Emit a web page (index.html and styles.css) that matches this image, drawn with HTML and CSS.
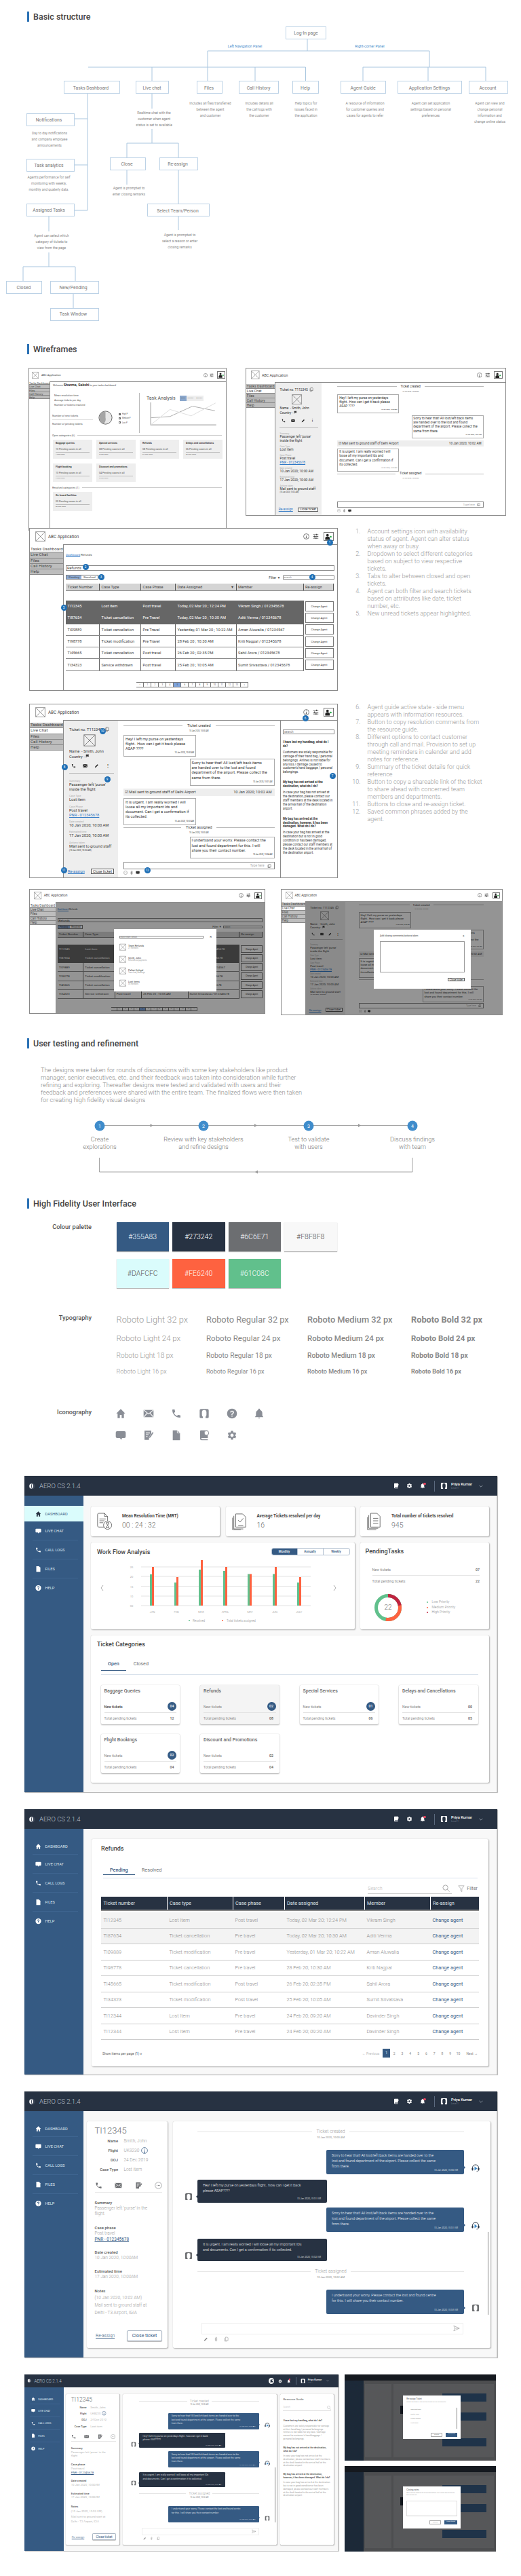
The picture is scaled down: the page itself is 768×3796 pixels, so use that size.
FILE: index.html
```html
<!DOCTYPE html>
<html lang="en">
<head>
    <meta charset="UTF-8">
    <meta name="viewport" content="width=device-width, initial-scale=1.0">
    <title>AERO CS case study</title>
    <link rel="stylesheet" href="styles.css">
</head>
<body>
<svg class="sprite" width="0" height="0">
    <symbol id="i-home" viewBox="0 0 24 24"><path d="M12 2 2 12h3v10h5v-7h4v7h5V12h3z"/></symbol>
    <symbol id="i-mail" viewBox="0 0 24 24"><path d="M1 4h22v16H1z"/><path d="m1 4 11 9 11-9M1 20l8-9M23 20l-8-9" fill="none" stroke="#fff" stroke-width="1.6"/></symbol>
    <symbol id="i-phone" viewBox="0 0 24 24"><path d="M6.600 10.800c1.400 2.800 3.800 5.100 6.600 6.600l2.200-2.200c.3-.3.700-.4 1-.2 1.100.4 2.300.6 3.600.6.600 0 1 .4 1 1V20c0 .6-.4 1-1 1C10.600 21 3 13.400 3 4c0-.6.4-1 1-1h3.500c.6 0 1 .4 1 1 0 1.300.2 2.500.6 3.600.1.3 0 .7-.2 1z"/></symbol>
    <symbol id="i-avatar" viewBox="0 0 24 24"><path d="M5 2h14a3 3 0 0 1 3 3v15a2 2 0 0 1-2 2h-5v-3a5 5 0 0 0 2-4V9a5 5 0 0 0-10 0v6a5 5 0 0 0 2 4v3H4a2 2 0 0 1-2-2V5a3 3 0 0 1 3-3z"/></symbol>
    <symbol id="i-agent" viewBox="0 0 24 24"><path d="M3 14v-3a9 9 0 0 1 18 0v3" fill="none" stroke="currentColor" stroke-width="2"/><rect x="1" y="11" width="4" height="8" rx="1.500"/><rect x="19" y="11" width="4" height="8" rx="1.500"/><path d="M9 7l8 6-8 6z" fill="#3f8ccb"/><path d="M20 19c0 2-2 3-5 3" fill="none" stroke="currentColor" stroke-width="1.500"/></symbol>
    <symbol id="i-help" viewBox="0 0 24 24"><path fill-rule="evenodd" d="M12 1a11 11 0 1 0 0 22 11 11 0 0 0 0-22zm-1.200 15.500h2.400v2.400h-2.400zm-.3-1.800v-.9c0-1.200 3.300-2.200 3.300-4.200 0-1-.8-1.600-1.900-1.600-1.100 0-1.800.7-2 1.700L7.800 9.200C8.200 7 10 5.500 12 5.500c2.500 0 4.300 1.600 4.300 3.900 0 3-3.300 3.600-3.300 5.300z"/></symbol>
    <symbol id="i-bell" viewBox="0 0 24 24"><path d="M12 23a2.200 2.200 0 0 0 2.200-2h-4.400a2.200 2.200 0 0 0 2.200 2zm7-6v-6c0-3.400-1.800-6.200-5-7V3a2 2 0 0 0-4 0v1c-3.200.8-5 3.600-5 7v6l-2 2v1h18v-1z"/></symbol>
    <symbol id="i-chat" viewBox="0 0 24 24"><path d="M4 3h16a3 3 0 0 1 3 3v9a3 3 0 0 1-3 3h-5l-2 4-3-4H4a3 3 0 0 1-3-3V6a3 3 0 0 1 3-3z"/></symbol>
    <symbol id="i-note" viewBox="0 0 24 24"><path d="M3 2h15v6l-5 8v6H3z"/><path d="M6 7h9M6 11h6M6 15h4" stroke="#fff" stroke-width="1.800"/><path d="M14 15 21 5l2 1.500L16 17l-3 1z"/></symbol>
    <symbol id="i-file" viewBox="0 0 24 24"><path d="M4 1h10l6 6v16H4z"/><path d="M14 1v6h6" fill="none" stroke="#fff" stroke-width="1.200"/></symbol>
    <symbol id="i-book" viewBox="0 0 24 24"><path d="M5 1h13a2 2 0 0 1 2 2v15H7a1.500 1.500 0 0 0 0 3h13v2H6a3 3 0 0 1-3-3V3a2 2 0 0 1 2-2z"/><circle cx="17" cy="7" r="5" fill="#fff" stroke="currentColor" stroke-width="1.500"/></symbol>
    <symbol id="i-gear" viewBox="0 0 24 24"><path d="M19.140 12.940c.04-.3.06-.61.06-.94 0-.32-.02-.64-.07-.94l2.030-1.580a.49.49 0 0 0 .12-.61l-1.920-3.320a.488.488 0 0 0-.59-.22l-2.390.96c-.5-.38-1.030-.7-1.620-.94l-.36-2.540a.484.484 0 0 0-.48-.41h-3.840c-.24 0-.43.17-.47.41l-.36 2.540c-.59.24-1.130.57-1.620.94l-2.390-.96c-.22-.08-.47 0-.59.22L2.740 8.870c-.12.21-.08.47.12.61l2.030 1.580c-.05.3-.09.63-.09.94s.02.64.07.94l-2.030 1.580a.49.49 0 0 0-.12.61l1.920 3.320c.12.22.37.29.59.22l2.390-.96c.5.38 1.030.7 1.620.94l.36 2.54c.05.24.24.41.48.41h3.840c.24 0 .44-.17.47-.41l.36-2.540c.59-.24 1.130-.56 1.620-.94l2.390.96c.22.08.47 0 .59-.22l1.920-3.320c.12-.22.07-.47-.12-.61l-2.010-1.580zM12 15.600c-1.980 0-3.600-1.620-3.600-3.600s1.620-3.600 3.600-3.600 3.600 1.620 3.600 3.600-1.620 3.600-3.600 3.600z"/></symbol>
    <symbol id="i-cross" viewBox="0 0 24 24"><path d="M1 1h22v22H1zM1 1l22 22M23 1 1 23" fill="none" stroke="#777" stroke-width="1.200"/></symbol>
    <symbol id="i-logo" viewBox="0 0 24 24"><circle cx="12" cy="12" r="11" fill="#3c4657"/><path d="M12 3a9 9 0 0 0 0 18c-3-3-3-15 0-18z" fill="#fff"/><path d="M12 3c4 2 5 7 4 12l-4 6z" fill="#fff"/></symbol>
    <symbol id="i-doc-time" viewBox="0 0 26 28"><g fill="none" stroke="currentColor" stroke-width=".9"><path d="M13 23H4a2 2 0 0 1-2-2V3a2 2 0 0 1 2-2h9l5 5v8"/><path d="M13 1v5h5M5 10h10M5 13h8M5 16h6"/><circle cx="18" cy="20" r="6.500"/><path d="M15.500 16h5l-2.500 4 2.500 4h-5l2.500-4z"/></g></symbol>
    <symbol id="i-doc-check" viewBox="0 0 26 28"><g fill="none" stroke="currentColor" stroke-width=".9"><path d="M7 2h11l5 5v16H7z"/><path d="M4 5v21h15M2 8v19h13"/><path d="m11 12 3 3 5-6M11 20h8"/></g></symbol>
    <symbol id="i-doc-list" viewBox="0 0 26 28"><g fill="none" stroke="currentColor" stroke-width=".9"><path d="M8 1h10l5 5v17H8z"/><path d="M5 4v21h15M3 7v20h14"/><path d="M12 9h8M12 13h8M12 17h8"/></g></symbol>
    <symbol id="i-send" viewBox="0 0 24 24"><path d="m2 3 20 9-20 9 4-9zM6 12h16" fill="none" stroke="currentColor" stroke-width="1.500"/></symbol>
    <symbol id="i-search" viewBox="0 0 24 24"><circle cx="10" cy="10" r="8" fill="none" stroke="currentColor" stroke-width="1.500"/><path d="m16 16 7 7" stroke="currentColor" stroke-width="1.500"/></symbol>
    <symbol id="i-filter" viewBox="0 0 24 24"><path d="M2 2h20l-8 10v11l-4-3v-8z" fill="none" stroke="currentColor" stroke-width="1.300"/></symbol>
    <symbol id="i-info" viewBox="0 0 24 24"><circle cx="12" cy="12" r="10.500" fill="none" stroke="currentColor" stroke-width="1.800"/><path d="M12 6v2.500M12 11v7M9.500 18h5" stroke="currentColor" stroke-width="2" fill="none"/></symbol>
    <symbol id="i-dots" viewBox="0 0 24 24"><circle cx="12" cy="12" r="10.500" fill="none" stroke="currentColor" stroke-width="1.200"/><path d="M6.500 12h2M11 12h2M15.500 12h2" stroke="currentColor" stroke-width="2"/></symbol>
    <symbol id="i-clip" viewBox="0 0 24 24"><path d="M8 6v12a4 4 0 0 0 8 0V5a3 3 0 0 0-6 0v12a1 1 0 0 0 3 0V7" fill="none" stroke="currentColor" stroke-width="1.500"/></symbol>
    <symbol id="i-sliders" viewBox="0 0 24 24"><path d="M2 5h20M2 12h20M2 19h20" stroke="currentColor" stroke-width="2.200"/><path d="M15 2v6M7 9v6M13 16v6" stroke="currentColor" stroke-width="3"/></symbol>
    <symbol id="i-person" viewBox="0 0 24 24"><circle cx="9" cy="6" r="4.500"/><path d="M1 23v-5c0-5 3-7 8-7s8 2 8 7v5z"/><circle cx="20.500" cy="12" r="3" fill="#18a33a"/></symbol>
    <symbol id="i-pen" viewBox="0 0 24 24"><path d="m3 21 1-5L16 4l4 4L8 20z"/></symbol>
    <symbol id="i-flag" viewBox="0 0 24 24"><path d="M3 3h18l-3 6 3 6H5v7H3z"/></symbol>
    <symbol id="i-copy" viewBox="0 0 24 24"><path d="M8 2h10l3 3v14H8zM4 6v16h13" fill="none" stroke="currentColor" stroke-width="1.800"/></symbol>
</svg>

<main class="page">
    <h2 class="heading">Basic structure</h2>
    <svg class="org" viewBox="0 32 768 475" width="768" height="475">
        <g class="org-lines">
            <path d="M453 58v17M306 75h327M306 75v44M633 75v24M130 99h320.500M224 99v20M376 99v20M450.500 99v20M535 99h181M535 99v20M631 99v20M716 99v20"/>
            <path d="M129 138v172M109 175h20M109 243h20M109 310h20M72 319v22M72 372v21M34 393h77M34 393v21M111 393v21M108 433v21"/>
            <path d="M224 138v22M224 190v21M187 211h76M187 211v21M263 211v21M187 251v21M263 251v49M263 319v20"/>
        </g>
        <text class="org-tag" x="361" y="70">Left Navigation Panel</text>
        <text class="org-tag" x="545" y="70">Right-corner Panel</text>

        <rect class="org-box" x="421.500" y="39.500" width="59" height="18"/><text class="org-name" x="451" y="51">Log-In page</text>
        <rect class="org-box" x="94.500" y="119.500" width="82" height="18"/><text class="org-name" x="134" y="131.500">Tasks Dashboard</text>
        <rect class="org-box" x="200.500" y="119.500" width="48" height="18"/><text class="org-name" x="224" y="131.500">Live chat</text>
        <rect class="org-box" x="290.500" y="119.500" width="37" height="18"/><text class="org-name" x="308" y="131.500">Files</text>
        <rect class="org-box" x="352.500" y="119.500" width="58" height="18"/><text class="org-name" x="381" y="131.500">Call History</text>
        <rect class="org-box" x="431.500" y="119.500" width="38" height="18"/><text class="org-name" x="450" y="131.500">Help</text>
        <rect class="org-box" x="502.500" y="119.500" width="66" height="18"/><text class="org-name" x="535" y="131.500">Agent Guide</text>
        <rect class="org-box" x="586.500" y="119.500" width="94" height="18"/><text class="org-name" x="633" y="131.500">Application Settings</text>
        <rect class="org-box" x="691.500" y="119.500" width="57" height="18"/><text class="org-name" x="719" y="131.500">Account</text>
        <rect class="org-box" x="39.500" y="167.500" width="70" height="18"/><text class="org-name" x="72" y="179">Notifications</text>
        <rect class="org-box" x="39.500" y="234.500" width="70" height="18"/><text class="org-name" x="72" y="246">Task analytics</text>
        <rect class="org-box" x="39.500" y="300.500" width="70" height="18"/><text class="org-name" x="72" y="312">Assigned Tasks</text>
        <rect class="org-box" x="9.500" y="414.500" width="52" height="18"/><text class="org-name" x="35" y="426">Closed</text>
        <rect class="org-box" x="74.500" y="414.500" width="71" height="18"/><text class="org-name" x="108" y="426">New/Pending</text>
        <rect class="org-box" x="74.500" y="454.500" width="71" height="18"/><text class="org-name" x="108" y="465">Task Window</text>
        <rect class="org-box" x="162.500" y="232.500" width="52" height="18"/><text class="org-name" x="187" y="244">Close</text>
        <rect class="org-box" x="235.500" y="232.500" width="56" height="18"/><text class="org-name" x="262" y="244">Re-assign</text>
        <rect class="org-box" x="217.500" y="300.500" width="91" height="18"/><text class="org-name" x="262" y="313">Select Team/Person</text>

        <text class="org-desc" x="310" y="154">Includes all files transferred<tspan x="310" dy="9">between the agent</tspan><tspan x="310" dy="9">and customer</tspan></text>
        <text class="org-desc" x="382" y="154">Includes details all<tspan x="382" dy="9">the call logs with</tspan><tspan x="382" dy="9">the customer</tspan></text>
        <text class="org-desc" x="451" y="154">Help topics for<tspan x="451" dy="9">issues faced in</tspan><tspan x="451" dy="9">the  application</tspan></text>
        <text class="org-desc" x="538" y="154">A resource of information<tspan x="538" dy="9">for customer queries and</tspan><tspan x="538" dy="9">cases for agents to refer</tspan></text>
        <text class="org-desc" x="635" y="154">Agent can set application<tspan x="635" dy="9">settings based on personal</tspan><tspan x="635" dy="9">preferences</tspan></text>
        <text class="org-desc" x="722" y="154">Agent can view and<tspan x="722" dy="9">change personal</tspan><tspan x="722" dy="9">information and</tspan><tspan x="722" dy="9">change online status</tspan></text>
        <text class="org-desc" x="73" y="198">Day to day notifications<tspan x="73" dy="9">and company employee</tspan><tspan x="73" dy="9">announcements</tspan></text>
        <text class="org-desc" x="72" y="263">Agent's performance for self<tspan x="72" dy="9">monitoring with weekly,</tspan><tspan x="72" dy="9">monthly and quaterly data.</tspan></text>
        <text class="org-desc" x="76" y="349">Agent can select which<tspan x="76" dy="9">category of tickets to</tspan><tspan x="76" dy="9">view from the page</tspan></text>
        <text class="org-desc" x="227" y="167.500">Realtime chat with the<tspan x="227" dy="9">customer when agent</tspan><tspan x="227" dy="9">status is set to available</tspan></text>
        <text class="org-desc" x="190" y="279">Agent is prompted to<tspan x="190" dy="9">enter closing remarks</tspan></text>
        <text class="org-desc" x="265" y="347.500">Agent  is prompted to<tspan x="265" dy="9">select a reason or enter</tspan><tspan x="265" dy="9">closing remarks</tspan></text>
    </svg>

    <h2 class="heading">Wireframes</h2>

    <div class="wf-row wf-row-first">
        <div class="wf wf-dash">
            <div class="wf-head">
                <svg class="wf-ph"><use href="#i-cross"/></svg><span class="wf-app">ABC Application</span>
                <span class="wf-tools"><svg><use href="#i-info"/></svg><svg><use href="#i-sliders"/></svg><span class="wf-me"><svg><use href="#i-person"/></svg></span></span>
            </div>
            <div class="wf-body">
                <ul class="wf-nav"><li class="on">Tasks Dashboard</li><li>Live Chat</li><li>Files</li><li>Call History</li><li>Help</li></ul>
                <div class="wf-main wd">
                    <p class="wd-hello">Welcome <b>Sharma, Sakshi</b> to your tasks dashboard</p>
                    <div class="wd-top">
                        <div class="wd-stats">
                            <p>Mean resolution time</p><p>Average tickets per day</p><p>Number of tickets resolved</p>
                        </div>
                        <div class="wd-pending">
                            <p class="rule">Number of new tickets</p><p>Number of pending tickets</p>
                        </div>
                        <svg class="wd-pie" viewBox="0 0 24 24"><circle cx="12" cy="12" r="11" fill="#e8e8e8" stroke="#555"/><path d="M12 12V1a11 11 0 0 0-4 21c4-2 5-6 4-10z" fill="#a5a5a5"/></svg>
                        <ul class="wd-legend"><li><i class="k1"></i>High P</li><li><i class="k2"></i>Medium P</li><li><i class="k3"></i>Low P</li></ul>
                        <div class="wd-task">
                            <div class="wd-task-head">Task Analysis<span class="wd-toggle"><b>Week</b><i>Monthly</i><i>Annually</i></span></div>
                            <svg class="wd-line" viewBox="0 0 110 38"><path d="M6 1v35h102" fill="none" stroke="#aaa" stroke-width="1.200"/><path d="M6 25 36 23 71 7l35 7" fill="none" stroke="#aaa"/><path d="m6 36 30-24 33 10 38-20" fill="none" stroke="#ddd"/></svg>
                        </div>
                    </div>
                    <div class="wd-rule">Open categories (6)</div>
                    <div class="wd-cards">
                        <div class="wd-card"><b>Baggage queries</b><span>10 Pending cases in all</span><small>4 New cases</small></div>
                        <div class="wd-card"><b>Special services</b><span>08 Pending cases in all</span><small>2 New cases</small></div>
                        <div class="wd-card"><b>Refunds</b><span>08 Pending cases in all</span><small>04 New cases</small></div>
                        <div class="wd-card"><b>Delays and cancellations</b><span>06 Pending cases in all</span><small>00 New cases</small></div>
                        <div class="wd-card"><b>Flight booking</b><span>10 Pending cases in all</span><small>2 New cases</small></div>
                        <div class="wd-card"><b>Discount and promotions</b><span>04 Pending cases in all</span><small>2 New cases</small></div>
                    </div>
                    <div class="wd-rule">Resolved categories (1)</div>
                    <div class="wd-cards">
                        <div class="wd-card"><b>On-board facilities</b><span>00 Pending cases in all</span><small>00 New cases</small></div>
                    </div>
                </div>
            </div>
        </div>

        <div class="wf wf-scale-85">
            <div class="wf-head">
                <svg class="wf-ph"><use href="#i-cross"/></svg><span class="wf-app">ABC Application</span>
                <span class="wf-tools"><svg><use href="#i-info"/></svg><svg><use href="#i-sliders"/></svg><span class="wf-me"><svg><use href="#i-person"/></svg></span></span>
            </div>
            <div class="wf-body">
                <ul class="wf-nav"><li>Tasks Dashboard</li><li class="on">Live Chat</li><li>Files</li><li>Call History</li><li>Help</li></ul>
                <div class="wf-main wc wc-full">
                    <div class="wc-info">
                        <p class="wc-no">Ticket no. T112345 <svg><use href="#i-copy"/></svg></p>
                        <svg class="wc-ph"><use href="#i-cross"/></svg>
                        <p class="wc-line">Name &nbsp;- Smith, John</p>
                        <p class="wc-line">Country - <svg class="wc-flag"><use href="#i-flag"/></svg></p>
                        <div class="wc-acts"><svg><use href="#i-phone"/></svg><svg><use href="#i-mail"/></svg><svg><use href="#i-pen"/></svg><span>&#8942;</span></div>
                        <dl class="wc-facts">
                            <dt>Summary</dt><dd>Passenger left 'purse'<br>inside the flight</dd>
                            <dt>Case Type</dt><dd>Lost item</dd>
                            <dt>Case Phase</dt><dd>Post travel<br><a>PNR - 012345678</a></dd>
                            <dt>Date created</dt><dd>10 Jan 2020; 10:00 AM</dd>
                            <dt>Estimated time</dt><dd>17 Jan 2020; 10:00 AM</dd>
                            <dt>Actions taken</dt><dd>Mail sent to ground staff<br><small>(10 Jan 2020, 10:02 AM)</small></dd>
                        </dl>
                        <div class="wc-foot"><a>Re-assign</a><button class="wc-btn">Close ticket</button></div>
                    </div>
                    <div class="wc-chat">
                        <div class="wc-event">Ticket created</div><div class="wc-date">10 Jan 2020, 10:00 AM</div>
                        <div class="wc-msg">Hey! I left my purse on yesterdays<br>flight.. How can i get it back please<br>ASAP ????<small>10 Jan 2020, 10:00 AM</small></div>
                        <div class="wc-msg me">Sorry to hear that! All lost/left back items<br>are handed over to the lost and found<br>department of the airport. Please collect the<br>same from there.<small>10 Jan 2020, 10:01 AM</small></div>
                        <div class="wc-strip"><span>&#9745; Mail sent to ground staff of Delhi Airport</span><span>10 Jan 2020; 10:02 AM</span></div>
                        <div class="wc-msg">It is urgent. I am really worried I will<br>loose all my important Ids and<br>document. Can i get a confirmation if<br>its collected.<small>10 Jan 2020, 10:03 AM</small></div>
                        <div class="wc-event">Ticket assigned</div><div class="wc-date">10 Jan 2020, 10:03 AM</div>
                        <div class="wc-space"></div>
                        <div class="wc-input">Type here <svg><use href="#i-copy"/></svg></div>
                        <div class="wc-tools"><svg><use href="#i-dots"/></svg><svg><use href="#i-clip"/></svg><svg><use href="#i-chat"/></svg></div>
                    </div>
                </div>
            </div>
        </div>
    </div>

    <div class="wf-row wf-row-table">
        <div class="wf wf-wide">
            <div class="wf-head">
                <svg class="wf-ph"><use href="#i-cross"/></svg><span class="wf-app">ABC Application</span>
                <span class="wf-tools"><svg><use href="#i-info"/></svg><svg><use href="#i-sliders"/></svg><span class="wf-me"><svg><use href="#i-person"/></svg></span></span>
            </div>
            <div class="wf-body">
                <ul class="wf-nav"><li class="on">Tasks Dashboard</li><li>Live Chat</li><li>Files</li><li>Call History</li><li>Help</li></ul>
                <div class="wf-main wt">
                    <p class="wt-crumb"><a>Dashboard</a> Refunds</p>
                    <div class="wt-select">Refunds</div>
                    <div class="wt-bar">
                        <span class="wt-tabs"><b>Pending</b><i>Resolved</i></span>
                        <span class="wt-filter">Filter &#9660; <em>search</em></span>
                    </div>
                    <table class="wt-table">
                        <thead><tr><th>Ticket Number</th><th>Case Type</th><th>Case Phase</th><th>Date Assigned <i>&#9662;</i></th><th>Member</th><th>Re-assign</th></tr></thead>
                        <tbody>
                            <tr class="new"><td>TI12345</td><td>Lost item</td><td>Post travel</td><td>Today, 02 Mar 20 ; 12:24 PM</td><td>Vikram Singh / 012345678</td><td><button>Change Agent</button></td></tr>
                            <tr class="new"><td>TI87654</td><td>Ticket cancellation</td><td>Pre Travel</td><td>Today, 02 Mar 20 ; 10:30 AM</td><td>Aditi Verma / 012345678</td><td><button>Change Agent</button></td></tr>
                            <tr><td>TI09889</td><td>Ticket cancellation</td><td>Pre Travel</td><td>Yesterday, 01 Mar 20 ; 10:22 AM</td><td>Aman Aluwalia / 01234567</td><td><button>Change Agent</button></td></tr>
                            <tr><td>TI98778</td><td>Ticket modification</td><td>Pre Travel</td><td>28 Feb 20 ; 10:30 AM</td><td>Kriti Nagpal / 012345678</td><td><button>Change Agent</button></td></tr>
                            <tr><td>TI45665</td><td>Ticket cancellation</td><td>Post travel</td><td>26 Feb 20 ; 02:35 PM</td><td>Sahil Arora / 012345678</td><td><button>Change Agent</button></td></tr>
                            <tr><td>TI34323</td><td>Service withdrawn</td><td>Post travel</td><td>25 Feb 20 ; 10:05 AM</td><td>Sumit Srivastava / 012345678</td><td><button>Change Agent</button></td></tr>
                        </tbody>
                    </table>
                    <div class="wt-pager"><i>&laquo;</i><i>1</i><i>2</i><i>3</i><i>4</i><b>5</b><i>6</i><i>7</i><i>8</i><i>9</i><i>10</i><i>11</i><i>12</i><i>13</i><i>&raquo;</i></div>
                </div>
            </div>
            <span class="pin pin-a1">1</span><span class="pin pin-a2">2</span><span class="pin pin-a3">3</span><span class="pin pin-a4">4</span><span class="pin pin-a5">5</span>
        </div>
        <ol class="notes">
            <li>Account settings icon with availability<br>status of agent. Agent can alter status<br>when away or busy.</li>
            <li>Dropdown to select different categories<br>based on subject to view respective<br>tickets.</li>
            <li>Tabs to alter between closed and open<br>tickets.</li>
            <li>Agent can both filter and search tickets<br>based on attriibutes like date, ticket<br>number, etc.</li>
            <li>New unread tickets appear highlighted.</li>
        </ol>
    </div>

    <div class="wf-row wf-row-chat">
        <div class="wf wf-wide wf-tall">
            <div class="wf-head">
                <svg class="wf-ph"><use href="#i-cross"/></svg><span class="wf-app">ABC Application</span>
                <span class="wf-tools"><svg><use href="#i-info"/></svg><svg><use href="#i-sliders"/></svg><span class="wf-me"><svg><use href="#i-person"/></svg></span></span>
            </div>
            <div class="wf-body">
                <ul class="wf-nav"><li>Tasks Dashboard</li><li class="on">Live Chat</li><li>Files</li><li>Call History</li><li>Help</li></ul>
                <div class="wf-main wc">
                    <div class="wc-info">
                        <p class="wc-no">Ticket no. T112345 <svg><use href="#i-copy"/></svg></p>
                        <svg class="wc-ph"><use href="#i-cross"/></svg>
                        <p class="wc-line">Name &nbsp;- Smith, John</p>
                        <p class="wc-line">Country - <svg class="wc-flag"><use href="#i-flag"/></svg></p>
                        <div class="wc-acts"><svg><use href="#i-phone"/></svg><svg><use href="#i-mail"/></svg><svg><use href="#i-pen"/></svg><span>&#8942;</span></div>
                        <dl class="wc-facts">
                            <dt>Summary</dt><dd>Passenger left 'purse'<br>inside the flight</dd>
                            <dt>Case Type</dt><dd>Lost item</dd>
                            <dt>Case Phase</dt><dd>Post travel<br><a>PNR - 012345678</a></dd>
                            <dt>Date created</dt><dd>10 Jan 2020; 10:00 AM</dd>
                            <dt>Estimated time</dt><dd>17 Jan 2020; 10:00 AM</dd>
                            <dt>Actions taken</dt><dd>Mail sent to ground staff<br><small>(10 Jan 2020, 10:02 AM)</small></dd>
                        </dl>
                        <div class="wc-foot"><a>Re-assign</a><button class="wc-btn">Close ticket</button></div>
                    </div>
                    <div class="wc-chat">
                        <div class="wc-event">Ticket created</div><div class="wc-date">10 Jan 2020, 10:00 AM</div>
                        <div class="wc-msg">Hey! I left my purse on yesterdays<br>flight.. How can i get it back please<br>ASAP ????<small>10 Jan 2020, 10:00 AM</small></div>
                        <div class="wc-msg me">Sorry to hear that! All lost/left back items<br>are handed over to the lost and found<br>department of the airport. Please collect the<br>same from there.<small>10 Jan 2020, 10:01 AM</small></div>
                        <div class="wc-strip"><span>&#9745; Mail sent to ground staff of Delhi Airport</span><span>10 Jan 2020; 10:02 AM</span></div>
                        <div class="wc-msg">It is urgent. I am really worried I will<br>loose all my important Ids and<br>document. Can i get a confirmation if<br>its collected.<small>10 Jan 2020, 10:03 AM</small></div>
                        <div class="wc-event">Ticket assigned</div><div class="wc-date">10 Jan 2020, 10:03 AM</div>
                        <div class="wc-msg me">I undertsand your worry. Please contact the<br>lost and found department for this. I will<br>share you their contact number.<small>10 Jan 2020, 10:04 AM</small></div>
                        <div class="wc-space"></div>
                        <div class="wc-input">Type here <svg><use href="#i-copy"/></svg></div>
                        <div class="wc-tools"><svg><use href="#i-dots"/></svg><svg><use href="#i-clip"/></svg><svg><use href="#i-chat"/></svg></div>
                    </div>
                    <div class="wc-guide">
                        <p class="wc-search">search</p>
                        <h4>I have lost my handbag, what do I do?</h4>
                        <p>Customers are solely responsible for carriage of their hand bag / personal belongings. Airlines is not liable for any loss / damage caused to customer's hand baggage / personal belongings.</p>
                        <h4>My bag has not arrived at the destination, what do I do?</h4>
                        <p>In case your bag has not arrived at the destination, please contact our staff members at the desk located in the arrival hall of the destination airport.</p>
                        <h4>My bag has arrived at the destination, however, it has been damaged. What do I do?</h4>
                        <p>In case your bag has arrived at the destination but is not in good condition or has been damaged, please contact our staff members at the desk located in the arrival hall of the destination airport.</p>
                    </div>
                </div>
            </div>
            <span class="pin pin-b6">6</span><span class="pin pin-b10">10</span><span class="pin pin-b8">8</span><span class="pin pin-b9">9</span><span class="pin pin-b7">7</span><span class="pin pin-b11">11</span><span class="pin pin-b12">12</span>
        </div>
        <ol class="notes" start="6">
            <li>Agent guide active state - side menu<br>appears with information resources.</li>
            <li>Button to copy resolution comments from<br>the resource guide.</li>
            <li>Different options to contact customer<br>through call and mail. Provision to set up<br>meeting reminders in calender and add<br>notes for reference.</li>
            <li>Summary of the ticket details for quick<br>reference</li>
            <li>Button to copy a shareable link of the ticket<br>to share ahead with concerned team<br>members and departments.</li>
            <li>Buttons to close and re-assign ticket.</li>
            <li>Saved common phrases added by the<br>agent.</li>
        </ol>
    </div>

    <div class="wf-row wf-row-modal">
        <div class="wf wf-scale-77">
            <div class="wf-head">
                <svg class="wf-ph"><use href="#i-cross"/></svg><span class="wf-app">ABC Application</span>
                <span class="wf-tools"><svg><use href="#i-info"/></svg><svg><use href="#i-sliders"/></svg><span class="wf-me"><svg><use href="#i-person"/></svg></span></span>
            </div>
            <div class="wf-body">
                <ul class="wf-nav"><li class="on">Tasks Dashboard</li><li>Live Chat</li><li>Files</li><li>Call History</li><li>Help</li></ul>
                <div class="wf-main wt">
                    <p class="wt-crumb"><a>Dashboard</a> Refunds</p>
                    <div class="wt-select">Refunds</div>
                    <div class="wt-bar">
                        <span class="wt-tabs"><b>Pending</b><i>Resolved</i></span>
                        <span class="wt-filter">Filter &#9660; <em>search</em></span>
                    </div>
                    <table class="wt-table">
                        <thead><tr><th>Ticket Number</th><th>Case Type</th><th>Case Phase</th><th>Date Assigned <i>&#9662;</i></th><th>Member</th><th>Re-assign</th></tr></thead>
                        <tbody>
                            <tr class="new"><td>TI12345</td><td>Lost item</td><td>Post travel</td><td>Today, 02 Mar 20 ; 12:24 PM</td><td>Vikram Singh / 012345678</td><td><button>Change Agent</button></td></tr>
                            <tr class="new"><td>TI87654</td><td>Ticket cancellation</td><td>Pre Travel</td><td>Today, 02 Mar 20 ; 10:30 AM</td><td>Aditi Verma / 012345678</td><td><button>Change Agent</button></td></tr>
                            <tr><td>TI09889</td><td>Ticket cancellation</td><td>Pre Travel</td><td>Yesterday, 01 Mar 20 ; 10:22 AM</td><td>Aman Aluwalia / 01234567</td><td><button>Change Agent</button></td></tr>
                            <tr><td>TI98778</td><td>Ticket modification</td><td>Pre Travel</td><td>28 Feb 20 ; 10:30 AM</td><td>Kriti Nagpal / 012345678</td><td><button>Change Agent</button></td></tr>
                            <tr><td>TI45665</td><td>Ticket cancellation</td><td>Post travel</td><td>26 Feb 20 ; 02:35 PM</td><td>Sahil Arora / 012345678</td><td><button>Change Agent</button></td></tr>
                            <tr><td>TI34323</td><td>Service withdrawn</td><td>Post travel</td><td>25 Feb 20 ; 10:05 AM</td><td>Sumit Srivastava / 012345678</td><td><button>Change Agent</button></td></tr>
                        </tbody>
                    </table>
                    <div class="wt-pager"><i>&laquo;</i><i>1</i><i>2</i><i>3</i><i>4</i><b>5</b><i>6</i><i>7</i><i>8</i><i>9</i><i>10</i><i>11</i><i>12</i><i>13</i><i>&raquo;</i></div>
                    <div class="wf-shade"></div>
                    <div class="wf-modal wf-modal-team">
                        <div class="wm-top"><span class="wm-field">Search team/ person</span><b>&#10005;</b></div>
                        <div class="wm-item"><svg><use href="#i-cross"/></svg><p>Team Refunds<small>27 members</small></p></div>
                        <div class="wm-item"><svg><use href="#i-cross"/></svg><p>Smith, John<small>Refunds and payments</small></p></div>
                        <div class="wm-item"><svg><use href="#i-cross"/></svg><p>Pallavi Sehgal<small>Team lead, Bookings</small></p></div>
                        <div class="wm-item"><svg><use href="#i-cross"/></svg><p>Lost items<small>33 members</small></p></div>
                    </div>
                </div>
            </div>
        </div>

        <div class="wf wf-scale-72">
            <div class="wf-head">
                <svg class="wf-ph"><use href="#i-cross"/></svg><span class="wf-app">ABC Application</span>
                <span class="wf-tools"><svg><use href="#i-info"/></svg><svg><use href="#i-sliders"/></svg><span class="wf-me"><svg><use href="#i-person"/></svg></span></span>
            </div>
            <div class="wf-body">
                <ul class="wf-nav"><li>Tasks Dashboard</li><li class="on">Live Chat</li><li>Files</li><li>Call History</li><li>Help</li></ul>
                <div class="wf-main wc wc-full">
                    <div class="wc-info">
                        <p class="wc-no">Ticket no. T112345 <svg><use href="#i-copy"/></svg></p>
                        <svg class="wc-ph"><use href="#i-cross"/></svg>
                        <p class="wc-line">Name &nbsp;- Smith, John</p>
                        <p class="wc-line">Country - <svg class="wc-flag"><use href="#i-flag"/></svg></p>
                        <div class="wc-acts"><svg><use href="#i-phone"/></svg><svg><use href="#i-mail"/></svg><svg><use href="#i-pen"/></svg><span>&#8942;</span></div>
                        <dl class="wc-facts">
                            <dt>Summary</dt><dd>Passenger left 'purse'<br>inside the flight</dd>
                            <dt>Case Type</dt><dd>Lost item</dd>
                            <dt>Case Phase</dt><dd>Post travel<br><a>PNR - 012345678</a></dd>
                            <dt>Date created</dt><dd>10 Jan 2020; 10:00 AM</dd>
                            <dt>Estimated time</dt><dd>17 Jan 2020; 10:00 AM</dd>
                            <dt>Actions taken</dt><dd>Mail sent to ground staff<br><small>(10 Jan 2020, 10:02 AM)</small></dd>
                        </dl>
                        <div class="wc-foot"><a>Re-assign</a><button class="wc-btn">Close ticket</button></div>
                    </div>
                    <div class="wc-chat">
                        <div class="wc-event">Ticket created</div><div class="wc-date">10 Jan 2020, 10:00 AM</div>
                        <div class="wc-msg">Hey! I left my purse on yesterdays<br>flight.. How can i get it back please<br>ASAP ????<small>10 Jan 2020, 10:00 AM</small></div>
                        <div class="wc-msg me">Sorry to hear that! All lost/left back items<br>are handed over to the lost and found<br>department of the airport. Please collect the<br>same from there.<small>10 Jan 2020, 10:01 AM</small></div>
                        <div class="wc-strip"><span>&#9745; Mail sent to ground staff of Delhi Airport</span><span>10 Jan 2020; 10:02 AM</span></div>
                        <div class="wc-msg">It is urgent. I am really worried I will<br>loose all my important Ids and<br>document. Can i get a confirmation if<br>its collected.<small>10 Jan 2020, 10:03 AM</small></div>
                        <div class="wc-event">Ticket assigned</div><div class="wc-date">10 Jan 2020, 10:03 AM</div>
                        <div class="wc-msg me">I undertsand your worry. Please contact the<br>lost and found department for this. I will<br>share you their contact number.<small>10 Jan 2020, 10:04 AM</small></div>
                        <div class="wc-space"></div>
                        <div class="wc-input">Type here <svg><use href="#i-copy"/></svg></div>
                        <div class="wc-tools"><svg><use href="#i-dots"/></svg><svg><use href="#i-clip"/></svg><svg><use href="#i-chat"/></svg></div>
                    </div>
                    <div class="wf-shade"></div>
                    <div class="wf-modal wf-modal-close">
                        <div class="wm-top"><span>Add closing comments/actions taken</span><b>&#10005;</b></div>
                        <div class="wm-area"></div>
                        <div class="wm-foot"><button class="wc-btn">Close ticket</button></div>
                    </div>
                </div>
            </div>
        </div>
    </div>

    <h2 class="heading heading-testing">User testing and refinement</h2>
    <p class="intro">The designs were taken for rounds of discussions with some key stakeholders like product<br>manager, senior executives, etc. and their feedback was taken into consideration while further<br>refining and exploring. Thereafter designs were tested and validated with users and their<br>feedback and preferences were shared with the entire team. The finalized flows were then taken<br>for creating high fidelity visual designs</p>
    <svg class="steps" viewBox="0 1645 768 90" width="768" height="90">
        <path class="step-line" d="M147 1658.500h461M146.500 1706v21h461.500v-21"/>
        <path class="step-arrow" d="M221.500 1656v5l4-2.500zM375 1656v5l4-2.500zM528 1656v5l4-2.500zM380 1724.500v5l-4-2.500z"/>
        <circle class="step-dot" cx="147" cy="1659" r="7.500"/><text class="step-no" x="147" y="1661.500">1</text>
        <circle class="step-dot" cx="300" cy="1659" r="7.500"/><text class="step-no" x="300" y="1661.500">2</text>
        <circle class="step-dot" cx="455" cy="1659" r="7.500"/><text class="step-no" x="455" y="1661.500">3</text>
        <circle class="step-dot" cx="608" cy="1659" r="7.500"/><text class="step-no" x="608" y="1661.500">4</text>
        <text class="step-name" x="147" y="1682">Create<tspan x="147" dy="11">explorations</tspan></text>
        <text class="step-name" x="300" y="1682">Review with key stakeholders<tspan x="300" dy="11">and refine designs</tspan></text>
        <text class="step-name" x="455" y="1682">Test to validate<tspan x="455" dy="11">with users</tspan></text>
        <text class="step-name" x="608" y="1682">Discuss findings<tspan x="608" dy="11">with team</tspan></text>
    </svg>

    <h2 class="heading heading-hifi">High Fidelity User Interface</h2>
    <div class="spec spec-palette">
        <h3 class="spec-label">Colour palette</h3>
        <div class="swatches">
            <div class="swatch sw-blue">#355A83</div>
            <div class="swatch sw-navy">#273242</div>
            <div class="swatch sw-grey">#6C6E71</div>
            <div class="swatch sw-white">#F8F8F8</div>
            <div class="swatch sw-aqua">#DAFCFC</div>
            <div class="swatch sw-orange">#FE6240</div>
            <div class="swatch sw-green">#61C08C</div>
        </div>
    </div>
    <div class="spec spec-type">
        <h3 class="spec-label">Typography</h3>
        <div class="type-grid">
            <span class="t-light t32">Roboto Light 32 px</span><span class="t-reg t32">Roboto Regular 32 px</span><span class="t-med t32">Roboto Medium 32 px</span><span class="t-bold t32">Roboto Bold 32 px</span>
            <span class="t-light t24">Roboto Light 24 px</span><span class="t-reg t24">Roboto Regular 24 px</span><span class="t-med t24">Roboto Medium 24 px</span><span class="t-bold t24">Roboto Bold 24 px</span>
            <span class="t-light t18">Roboto Light 18 px</span><span class="t-reg t18">Roboto Regular 18 px</span><span class="t-med t18">Roboto Medium 18 px</span><span class="t-bold t18">Roboto Bold 18 px</span>
            <span class="t-light t16">Roboto Light 16 px</span><span class="t-reg t16">Roboto Regular 16 px</span><span class="t-med t16">Roboto Medium 16 px</span><span class="t-bold t16">Roboto Bold 16 px</span>
        </div>
    </div>
    <div class="spec spec-icons">
        <h3 class="spec-label">Iconography</h3>
        <div class="icon-grid">
            <svg><use href="#i-home"/></svg><svg><use href="#i-mail"/></svg><svg><use href="#i-phone"/></svg><svg><use href="#i-avatar"/></svg><svg><use href="#i-help"/></svg><svg><use href="#i-bell"/></svg>
            <svg><use href="#i-chat"/></svg><svg><use href="#i-note"/></svg><svg><use href="#i-file"/></svg><svg><use href="#i-book"/></svg><svg><use href="#i-gear"/></svg>
        </div>
    </div>

    <!-- dashboard -->
    <section class="mock mock-dash">
        <header class="mock-head">
            <svg class="mock-logo"><use href="#i-logo"/></svg><span class="mock-brand">AERO CS 2.1.4</span>
            <div class="mock-tools"><svg><use href="#i-book"/></svg><svg><use href="#i-gear"/></svg><span class="mock-bell"><svg><use href="#i-bell"/></svg></span><svg class="mock-me"><use href="#i-avatar"/></svg><p class="mock-user">Priya Kumar<small>Level 1</small></p><svg class="mock-chev" viewBox="0 0 10 6"><path d="m1 1 4 4 4-4"/></svg></div>
        </header>
        <nav class="mock-side">
            <a class="active"><svg><use href="#i-home"/></svg>DASHBOARD</a>
            <a><svg><use href="#i-chat"/></svg>LIVE CHAT</a>
            <a><svg><use href="#i-phone"/></svg>CALL LOGS</a>
            <a><svg><use href="#i-file"/></svg>FILES</a>
            <a><svg><use href="#i-help"/></svg>HELP</a>
        </nav>
        <div class="mock-main dash">
            <div class="card stat"><svg class="stat-ic"><use href="#i-doc-time"/></svg><div><h5>Mean Resolution Time (MRT)</h5><p>00 : 24 : 32</p></div></div>
            <div class="card stat"><svg class="stat-ic"><use href="#i-doc-check"/></svg><div><h5>Average Tickets resolved per day</h5><p>16</p></div></div>
            <div class="card stat"><svg class="stat-ic"><use href="#i-doc-list"/></svg><div><h5>Total number of tickets resolved</h5><p>945</p></div></div>

            <div class="card flow">
                <div class="card-top"><h4>Work Flow Analysis</h4><div class="seg"><b>Monthly</b><span>Annually</span><span>Weekly</span></div></div>
                <svg class="flow-chart" viewBox="0 20 390 108" width="390" height="108">
                    <path class="grid" d="M74 36h250M74 50h250M74 64.700h250M74 79h250M74 93h250"/>
                    <g class="axis"><text x="60" y="38">25</text><text x="60" y="52">20</text><text x="60" y="66.700">15</text><text x="60" y="81">10</text><text x="60" y="95">00</text></g>
                    <g class="axis"><text x="90.500" y="104">JAN</text><text x="126" y="104">FEB</text><text x="162.500" y="104">MAR</text><text x="198" y="104">APRIL</text><text x="234.500" y="104">MAY</text><text x="271" y="104">JUN</text><text x="306.700" y="104">JULY</text></g>
                    <g class="bar-g"><rect x="87" y="47" width="3" height="46"/><rect x="123" y="59" width="3" height="34"/><rect x="159" y="40" width="3" height="53"/><rect x="195" y="42" width="3" height="51"/><rect x="231" y="46.500" width="3" height="46.500"/><rect x="268" y="46.500" width="3" height="46.500"/><rect x="304" y="59" width="3" height="34"/></g>
                    <g class="bar-r"><rect x="90" y="36" width="3" height="57"/><rect x="126" y="51" width="3" height="42"/><rect x="162" y="26" width="3" height="67"/><rect x="198" y="36" width="3" height="57"/><rect x="234" y="46.500" width="3" height="46.500"/><rect x="271" y="36" width="3" height="57"/><rect x="307" y="51" width="3" height="42"/></g>
                    <path class="flow-nav" d="M18 63l-3 4 3 4M358 63l3 4-3 4"/>
                    <circle class="dot-g" cx="145" cy="115" r="1"/><text class="leg" x="150" y="117">Resolved</text>
                    <circle class="dot-r" cx="194" cy="115" r="1"/><text class="leg" x="200" y="117">Total tickets  assigned</text>
                </svg>
            </div>
            <div class="card pending">
                <h4>PendingTasks</h4>
                <div class="kv"><span>New tickets</span><b>07</b></div>
                <div class="kv"><span>Total pending tickets</span><b>22</b></div>
                <div class="pending-low">
                    <svg class="donut" viewBox="0 0 40 40"><circle cx="20" cy="20" r="17.500" stroke="#61c08c"/><circle cx="20" cy="20" r="17.500" stroke="#fe6240" pathLength="100" stroke-dasharray="32 68" stroke-dashoffset="-21"/><circle cx="20" cy="20" r="17.500" stroke="#c0233f" pathLength="100" stroke-dasharray="22 78" stroke-dashoffset="0"/><text x="20" y="23">22</text></svg>
                    <ul class="prio"><li class="g">Low Priority</li><li class="o">Medium Priority</li><li class="r">High Priority</li></ul>
                </div>
            </div>

            <div class="card cats">
                <h4>Ticket Categories</h4>
                <div class="tabs"><span class="on">Open</span><span>Closed</span></div>
                <div class="cat-grid">
                    <div class="cat"><h6>Baggage Queries</h6><div class="row"><span class="strong">New tickets</span><b class="pill">04</b></div><div class="row"><span>Total pending tickets</span><b>12</b></div></div>
                    <div class="cat hover"><h6>Refunds</h6><div class="row"><span>New tickets</span><b class="pill">02</b></div><div class="row"><span>Total pending tickets</span><b>08</b></div></div>
                    <div class="cat"><h6>Special Services</h6><div class="row"><span>New tickets</span><b class="pill">01</b></div><div class="row"><span>Total pending tickets</span><b>06</b></div></div>
                    <div class="cat"><h6>Delays and Cancellations</h6><div class="row"><span>New tickets</span><b>00</b></div><div class="row"><span>Total pending tickets</span><b>05</b></div></div>
                    <div class="cat"><h6>Flight Bookings</h6><div class="row"><span>New tickets</span><b class="pill">02</b></div><div class="row"><span>Total pending tickets</span><b>04</b></div></div>
                    <div class="cat"><h6>Discount and Promotions</h6><div class="row"><span>New tickets</span><b>02</b></div><div class="row"><span>Total pending tickets</span><b>04</b></div></div>
                </div>
            </div>
        </div>
    </section>

    <!-- refunds -->
    <section class="mock mock-refunds">
        <header class="mock-head">
            <svg class="mock-logo"><use href="#i-logo"/></svg><span class="mock-brand">AERO CS 2.1.4</span>
            <div class="mock-tools"><svg><use href="#i-book"/></svg><svg><use href="#i-gear"/></svg><span class="mock-bell"><svg><use href="#i-bell"/></svg></span><svg class="mock-me"><use href="#i-avatar"/></svg><p class="mock-user">Priya Kumar<small>Level 1</small></p><svg class="mock-chev" viewBox="0 0 10 6"><path d="m1 1 4 4 4-4"/></svg></div>
        </header>
        <nav class="mock-side">
            <a><svg><use href="#i-home"/></svg>DASHBOARD</a>
            <a><svg><use href="#i-chat"/></svg>LIVE CHAT</a>
            <a><svg><use href="#i-phone"/></svg>CALL LOGS</a>
            <a><svg><use href="#i-file"/></svg>FILES</a>
            <a><svg><use href="#i-help"/></svg>HELP</a>
        </nav>
        <div class="mock-main refunds">
            <div class="card ref-card">
                <h4>Refunds</h4>
                <div class="tabs"><span class="on">Pending</span><span>Resolved</span></div>
                <div class="ref-tools"><span class="ref-search">Search<svg><use href="#i-search"/></svg></span><span class="ref-filter"><svg><use href="#i-filter"/></svg>Filter</span></div>
                <table class="ref-table">
                    <thead><tr><th>Ticket number</th><th>Case type</th><th>Case phase</th><th>Date assigned</th><th>Member</th><th>Re-assign</th></tr></thead>
                    <tbody>
                        <tr class="new"><td>TI12345</td><td>Lost Item</td><td>Post travel</td><td>Today, 02 Mar 20; 12:24 PM</td><td>Vikram Singh</td><td><a>Change agent</a></td></tr>
                        <tr class="new"><td>TI87654</td><td>Ticket cancellation</td><td>Pre travel</td><td>Today, 02 Mar 20; 10:30 AM</td><td>Aditi Verma</td><td><a>Change agent</a></td></tr>
                        <tr><td>TI09889</td><td>Ticket modification</td><td>Pre travel</td><td>Yesterday, 01 Mar 20; 10:22 AM</td><td>Aman Aluwalia</td><td><a>Change agent</a></td></tr>
                        <tr><td>TI98778</td><td>Ticket cancellation</td><td>Pre travel</td><td>28 Feb 20; 10:30 AM</td><td>Kriti Nagpal</td><td><a>Change agent</a></td></tr>
                        <tr><td>TI45665</td><td>Ticket modification</td><td>Post travel</td><td>26 Feb 20; 02:35 PM</td><td>Sahil Arora</td><td><a>Change agent</a></td></tr>
                        <tr><td>TI34323</td><td>Ticket modification</td><td>Post travel</td><td>25 Feb 20; 10:05 AM</td><td>Sumit Srivatsava</td><td><a>Change agent</a></td></tr>
                        <tr><td>TI12344</td><td>Lost Item</td><td>Pre travel</td><td>24 Feb 20; 09:20 AM</td><td>Davinder Singh</td><td><a>Change agent</a></td></tr>
                        <tr><td>TI12344</td><td>Lost Item</td><td>Pre travel</td><td>24 Feb 20; 09:20 AM</td><td>Davinder Singh</td><td><a>Change agent</a></td></tr>
                    </tbody>
                </table>
                <div class="ref-foot">
                    <span class="ref-per">Show items per page <em>(1)</em> &#8744;</span>
                    <div class="ref-pager"><span class="off">&#8592; Previous</span><b>1</b><i>2</i><i>3</i><i>4</i><i>5</i><i>6</i><i>7</i><i>8</i><i>9</i><i>10</i><span>Next &#8594;</span></div>
                </div>
            </div>
        </div>
    </section>

    <!-- chat -->
    <section class="mock mock-chat">
        <header class="mock-head">
            <svg class="mock-logo"><use href="#i-logo"/></svg><span class="mock-brand">AERO CS 2.1.4</span>
            <div class="mock-tools"><svg><use href="#i-book"/></svg><svg><use href="#i-gear"/></svg><span class="mock-bell"><svg><use href="#i-bell"/></svg></span><svg class="mock-me"><use href="#i-avatar"/></svg><p class="mock-user">Priya Kumar<small>Level 1</small></p><svg class="mock-chev" viewBox="0 0 10 6"><path d="m1 1 4 4 4-4"/></svg></div>
        </header>
        <nav class="mock-side">
            <a><svg><use href="#i-home"/></svg>DASHBOARD</a>
            <a><svg><use href="#i-chat"/></svg>LIVE CHAT</a>
            <a><svg><use href="#i-phone"/></svg>CALL LOGS</a>
            <a><svg><use href="#i-file"/></svg>FILES</a>
            <a><svg><use href="#i-help"/></svg>HELP</a>
        </nav>
        <div class="mock-main chat">
            <aside class="card tk">
                <h3>TI12345</h3>
                <dl class="tk-meta"><dt>Name</dt><dd>Smith, John</dd><dt>Flight</dt><dd>UK8230 <svg><use href="#i-info"/></svg></dd><dt>DOJ</dt><dd>24 Dec 2019</dd><dt>Case Type</dt><dd>Lost item</dd></dl>
                <div class="tk-acts"><svg><use href="#i-phone"/></svg><svg><use href="#i-mail"/></svg><svg><use href="#i-note"/></svg><svg><use href="#i-dots"/></svg></div>
                <div class="tk-fact f-sum"><h6>Summary</h6><p>Passenger left 'purse' in the<br>flight</p></div>
                <div class="tk-fact f-phase"><h6>Case phase</h6><p>Post travel</p><a>PNR - 012345678</a></div>
                <div class="tk-fact"><h6>Date created</h6><p>10 Jan 2020, 10:00AM</p></div>
                <div class="tk-fact"><h6>Estimated time</h6><p>17 Jan 2020, 10:00AM</p></div>
                <div class="tk-fact f-notes"><h6>Notes</h6><p>(10 Jan 2020, 10:02 AM)<br>Mail sent to ground staff at<br>Delhi - T3 Airport, IGIA</p></div>
                <div class="tk-foot"><a>Re-assign</a><button>Close ticket</button></div>
            </aside>
            <div class="card conv">
                <div class="conv-event">Ticket created</div><div class="conv-date">10 Jan 2020, 10:00 AM</div>
                <div class="msg agent m1">Sorry to hear that! All lost/left back items are handed over to the<br>lost and found department of the airport. Please collect the same<br>from there.<small>10 Jan 2020, 10:00 AM</small><svg class="msg-av"><use href="#i-agent"/></svg></div>
                <div class="msg cust m2">Hey! I left my purse on yesterdays flight.. how can i get it back<br>please ASAP????<small>10 Jan 2020, 10:01 AM</small><svg class="msg-av"><use href="#i-avatar"/></svg></div>
                <div class="msg agent m3">Sorry to hear that! All lost/left back items are handed over to the<br>lost and found department of the airport. Please collect the same<br>from there.<small>10 Jan 2020, 10:01 AM</small><svg class="msg-av"><use href="#i-agent"/></svg></div>
                <div class="msg cust m4">It is urgent. I am really worried I will loose all my important IDs<br>and documents. Can I get a confirmation if its collected.<small>10 Jan 2020, 10:02 AM</small><svg class="msg-av"><use href="#i-avatar"/></svg></div>
                <div class="conv-event e2">Ticket assigned</div><div class="conv-date">10 Jan 2020, 10:02 AM</div>
                <div class="msg agent m5">I undertsand your worry. Please contact the lost and found centre<br>for this. I will share you their contact number.<small>10 Jan 2020, 10:04 AM</small><svg class="msg-av av-grey"><use href="#i-avatar"/></svg></div>
                <div class="conv-input"><svg><use href="#i-send"/></svg></div>
                <div class="conv-tools"><svg><use href="#i-pen"/></svg><svg><use href="#i-clip"/></svg><svg><use href="#i-copy"/></svg></div>
                <span class="conv-scroll"></span>
            </div>
        </div>
    </section>

    <!-- agent guide + modals -->
    <div class="last-row">
        <section class="mock mock-guide">
            <header class="mock-head">
                <svg class="mock-logo"><use href="#i-logo"/></svg><span class="mock-brand">AERO CS 2.1.4</span>
                <div class="mock-tools"><span class="guide-on"><svg><use href="#i-book"/></svg></span><svg><use href="#i-gear"/></svg><span class="mock-bell"><svg><use href="#i-bell"/></svg></span><svg class="mock-me"><use href="#i-avatar"/></svg><p class="mock-user">Priya Kumar<small>Level 1</small></p><svg class="mock-chev" viewBox="0 0 10 6"><path d="m1 1 4 4 4-4"/></svg></div>
            </header>
            <nav class="mock-side">
                <a><svg><use href="#i-home"/></svg>DASHBOARD</a>
                <a><svg><use href="#i-chat"/></svg>LIVE CHAT</a>
                <a><svg><use href="#i-phone"/></svg>CALL LOGS</a>
                <a><svg><use href="#i-file"/></svg>FILES</a>
                <a><svg><use href="#i-help"/></svg>HELP</a>
            </nav>
            <div class="mock-main chat">
                <aside class="card tk">
                    <h3>TI12345</h3>
                    <dl class="tk-meta"><dt>Name</dt><dd>Smith, John</dd><dt>Flight</dt><dd>UK8230 <svg><use href="#i-info"/></svg></dd><dt>DOJ</dt><dd>24 Dec 2019</dd><dt>Case Type</dt><dd>Lost item</dd></dl>
                    <div class="tk-acts"><svg><use href="#i-phone"/></svg><svg><use href="#i-mail"/></svg><svg><use href="#i-note"/></svg><svg><use href="#i-dots"/></svg></div>
                    <div class="tk-fact f-sum"><h6>Summary</h6><p>Passenger left 'purse' in the<br>flight</p></div>
                    <div class="tk-fact f-phase"><h6>Case phase</h6><p>Post travel</p><a>PNR - 012345678</a></div>
                    <div class="tk-fact"><h6>Date created</h6><p>10 Jan 2020, 10:00AM</p></div>
                    <div class="tk-fact"><h6>Estimated time</h6><p>17 Jan 2020, 10:00AM</p></div>
                    <div class="tk-fact f-notes"><h6>Notes</h6><p>(10 Jan 2020, 10:02 AM)<br>Mail sent to ground staff at<br>Delhi - T3 Airport, IGIA</p></div>
                    <div class="tk-foot"><a>Re-assign</a><button>Close ticket</button></div>
                </aside>
                <div class="card conv">
                    <div class="conv-event">Ticket created</div><div class="conv-date">10 Jan 2020, 10:00 AM</div>
                    <div class="msg agent m1">Sorry to hear that! All lost/left back items are handed over to the<br>lost and found department of the airport. Please collect the same<br>from there.<small>10 Jan 2020, 10:00 AM</small><svg class="msg-av"><use href="#i-agent"/></svg></div>
                    <div class="msg cust m2">Hey! I left my purse on yesterdays flight.. how can i get it back<br>please ASAP????<small>10 Jan 2020, 10:01 AM</small><svg class="msg-av"><use href="#i-avatar"/></svg></div>
                    <div class="msg agent m3">Sorry to hear that! All lost/left back items are handed over to the<br>lost and found department of the airport. Please collect the same<br>from there.<small>10 Jan 2020, 10:01 AM</small><svg class="msg-av"><use href="#i-agent"/></svg></div>
                    <div class="msg cust m4">It is urgent. I am really worried I will loose all my important IDs<br>and documents. Can I get a confirmation if its collected.<small>10 Jan 2020, 10:02 AM</small><svg class="msg-av"><use href="#i-avatar"/></svg></div>
                    <div class="conv-event e2">Ticket assigned</div><div class="conv-date">10 Jan 2020, 10:02 AM</div>
                    <div class="msg agent m5">I undertsand your worry. Please contact the lost and found centre<br>for this. I will share you their contact number.<small>10 Jan 2020, 10:04 AM</small><svg class="msg-av av-grey"><use href="#i-avatar"/></svg></div>
                    <div class="conv-input"><svg><use href="#i-send"/></svg></div>
                    <div class="conv-tools"><svg><use href="#i-pen"/></svg><svg><use href="#i-clip"/></svg><svg><use href="#i-copy"/></svg></div>
                    <span class="conv-scroll"></span>
                </div>
                <aside class="card guide">
                    <h4>Resource Guide</h4>
                    <div class="guide-search">Search<svg><use href="#i-search"/></svg></div>
                    <h6>I have lost my handbag, what do I do?</h6>
                    <p>Customers are solely responsible for carriage of their hand bag / personal belongings. Airlines is not liable for any loss / damage caused to customer's hand baggage / personal belongings.</p>
                    <h6>My bag has not arrived at the destination, what do I do?</h6>
                    <p>In case your bag has not arrived at the destination, please contact our staff members at the desk located in the arrival hall of the destination airport.</p>
                    <h6>My bag has arrived at the destination, however, it has been damaged. What do I do?</h6>
                    <p>In case your bag has arrived at the destination but is not in good condition or has been damaged, please contact our staff members at the desk located in the arrival hall of the destination airport.</p>
                </aside>
            </div>
        </section>

        <div class="thumbs">
            <div class="thumb">
                <div class="th-head"></div>
                <div class="th-body">
                    <div class="th-side"></div>
                    <div class="th-panel"></div>
                    <div class="th-chat"><i class="b1"></i><i class="b2"></i><i class="b3"></i><i class="b4"></i></div>
                </div>
                <div class="th-modal">
                    <h6>Re-assign Ticket</h6>
                    <p>Select the team or person the ticket will be assigned to</p>
                    <div class="th-list"><span>Team Refunds</span><span>Smith, John</span><span>Pallavi Sehgal</span><span>Lost items</span></div>
                    <div class="th-btns"><u>Cancel</u><b>Re-assign</b></div>
                </div>
            </div>
            <div class="thumb">
                <div class="th-head"></div>
                <div class="th-body">
                    <div class="th-side"></div>
                    <div class="th-panel"></div>
                    <div class="th-chat"><i class="b1"></i><i class="b2"></i><i class="b3"></i><i class="b4"></i></div>
                </div>
                <div class="th-modal th-modal-notes">
                    <h6>Closing notes</h6>
                    <p>Add closing remarks for this ticket before it is closed and moved to the closed list</p>
                    <div class="th-area"></div>
                    <div class="th-btns"><u>Cancel</u><b>Close ticket</b></div>
                </div>
            </div>
        </div>
    </div>
</main>
</body>
</html>
```

FILE: styles.css
```css
* {
    box-sizing: border-box;
}
body {
    margin: 0;
    background: #fff;
    color: #666;
    font-family: Roboto, "Liberation Sans", sans-serif;
}
p, h2, h3, h4, h5, h6, ul, ol, dl, dd {
    margin: 0;
    padding: 0;
}
ul {
    list-style: none;
}
.sprite {
    position: absolute;
}
svg {
    fill: currentColor;
}
.page {
    width: 768px;
    height: 3796px;
    padding-top: 17px;
    overflow: hidden;
}

/* section headings */
.heading {
    height: 15px;
    margin-left: 40px;
    padding-left: 6px;
    border-left: 3px solid #2a70b4;
    color: #444;
    font-size: 12.500px;
    font-weight: 500;
    line-height: 15px;
}
.heading-testing {
    margin-top: 34px;
}
.heading-hifi {
    margin-top: 31px;
}

/* org chart */
.org {
    display: block;
}
.org-lines path {
    fill: none;
    stroke: #a9c6df;
    stroke-width: 1;
}
.org-box {
    fill: #fff;
    stroke: #bcd2e6;
    stroke-width: 1;
}
.org-name, .org-desc, .org-tag {
    text-anchor: middle;
    font-family: Roboto, sans-serif;
}
.org-name {
    fill: #777;
    font-size: 6.800px;
}
.org-desc {
    fill: #888;
    font-size: 5px;
}
.org-tag {
    fill: #3f8ccb;
    font-size: 5.300px;
}

/* wireframes */
.wf-row {
    display: flex;
    padding-left: 43px;
}
.wf-row-first {
    margin-top: 20px;
    height: 217px;
    padding-left: 42px;
}
.wf-row-first .wf-dash {
    width: 292px;
    margin-right: 28px;
}
.wf-row-table {
    margin-top: 19px;
    height: 240px;
}
.wf-row-chat {
    margin-top: 19px;
    height: 257px;
}
.wf-row-modal {
    margin-top: 16px;
    height: 186px;
}
.wf {
    position: relative;
    display: flex;
    flex-direction: column;
    width: 454.500px;
    height: 240px;
    border: 1px solid #8a8a8a;
    background: #fff;
    color: #444;
    flex: none;
}
.wf-tall {
    height: 257px;
}
.wf-scale-85 {
    zoom: .85;
    height: 256px;
    width: 452px;
}
.wf-scale-77 {
    zoom: .766;
    margin-right: 30px;
}
.wf-scale-72 {
    zoom: .72;
    height: 258px;
}
.wf-head {
    display: flex;
    align-items: center;
    flex: none;
    height: 23px;
    padding: 0 5px 0 8px;
}
.wf-ph {
    width: 15px;
    height: 15px;
    color: #777;
}
.wf-app {
    margin-left: 4px;
    font-size: 6.300px;
}
.wf-tools {
    display: flex;
    align-items: center;
    gap: 5px;
    margin-left: auto;
}
.wf-tools > svg {
    width: 9px;
    height: 9px;
}
.wf-me {
    display: flex;
    align-items: center;
    justify-content: center;
    width: 15px;
    height: 13px;
    margin-left: 2px;
    border: 1px solid #777;
}
.wf-me svg {
    width: 10px;
    height: 10px;
    color: #222;
}
.wf-body {
    display: flex;
    flex: 1;
    min-height: 0;
}
.wf-nav {
    flex: none;
    width: 49px;
    padding-top: 4px;
    font-size: 6.200px;
}
.wf-nav li {
    height: 8.300px;
    padding-left: 1px;
    background: #bdbdbd;
    border-bottom: 1px solid #888;
    line-height: 7.500px;
    white-space: nowrap;
}
.wf-nav li.on {
    background: #fff;
}
.wf-main {
    position: relative;
    flex: 1;
    min-width: 0;
    border-top: 1px solid #8a8a8a;
    border-left: 1px solid #8a8a8a;
}
.pin {
    position: absolute;
    width: 9px;
    height: 9px;
    margin: -4.500px 0 0 -4.500px;
    border-radius: 50%;
    background: #1f6fb5;
    color: #fff;
    font-size: 4.500px;
    line-height: 9px;
    text-align: center;
}
.pin-a1 { left: 442px; top: 20px; }
.pin-a2 { left: 82px; top: 56px; }
.pin-a3 { left: 105px; top: 71px; }
.pin-a4 { left: 416px; top: 71px; }
.pin-a5 { left: 50px; top: 116px; }
.pin-b6 { left: 406px; top: 20px; }
.pin-b10 { left: 107px; top: 39px; }
.pin-b8 { left: 51px; top: 92px; }
.pin-b9 { left: 114px; top: 110px; }
.pin-b7 { left: 446px; top: 105px; }
.pin-b11 { left: 50px; top: 244px; }
.pin-b12 { left: 173px; top: 244px; }

/* wireframe: dashboard */
.wf-dash .wf-head {
    height: 19px;
    padding: 0 1px 0 4px;
}
.wf-dash .wf-ph {
    width: 10px;
    height: 12px;
}
.wf-dash .wf-app {
    font-size: 4px;
}
.wf-dash .wf-tools {
    gap: 3px;
}
.wf-dash .wf-tools > svg {
    width: 6px;
    height: 6px;
}
.wf-dash .wf-me {
    width: 12px;
    height: 11px;
}
.wf-dash .wf-me svg {
    width: 8px;
    height: 8px;
}
.wf-dash .wf-nav {
    width: 30px;
    padding-top: 0;
    font-size: 4px;
}
.wf-dash .wf-nav li {
    height: 5.300px;
    line-height: 5px;
    padding: 0;
}
.wd {
    padding: 0 6px 0 3px;
    font-size: 3.800px;
    color: #555;
}
.wd-hello {
    height: 16px;
    padding: 0 0 0 1px;
    line-height: 5px;
    padding-top: 2px;
    font-size: 3.600px;
}
.wd-hello b {
    font-size: 5.400px;
    color: #333;
}
.wd-top {
    display: grid;
    grid-template-columns: 60px 35px 33px 1fr;
    grid-template-rows: 29px 25px;
    height: 59px;
}
.wd-stats {
    grid-column: 1 / 4;
    padding-left: 3px;
    line-height: 7.200px;
}
.wd-pending {
    align-self: start;
    padding-top: 1px;
}
.wd-pending p {
    line-height: 7px;
}
.wd-pending .rule {
    padding-bottom: 2px;
    margin-bottom: 2px;
    border-bottom: 1px solid #ddd;
}
.wd-pie {
    width: 21px;
    height: 21px;
    margin: -3px 0 0 8px;
}
.wd-legend {
    margin: -1px 0 0 3px;
    font-size: 2.800px;
}
.wd-legend li {
    display: flex;
    align-items: center;
    gap: 2px;
    height: 6.300px;
    white-space: nowrap;
}
.wd-legend i {
    width: 3px;
    height: 3px;
    border: .5px solid #666;
}
.wd-legend .k1 {
    background: #888;
}
.wd-legend .k2 {
    background: #ccc;
}
.wd-task {
    grid-column: 4;
    grid-row: 1 / 3;
    height: 59px;
    padding: 4px 0 0 10px;
    border-left: 1px solid #bbb;
}
.wd-task-head {
    display: flex;
    align-items: center;
    gap: 6px;
    color: #555;
    font-size: 7px;
    line-height: 8px;
}
.wd-toggle {
    display: flex;
    font-size: 2.400px;
    font-style: normal;
}
.wd-toggle b {
    background: #8aa7cc;
    padding: 0 2px;
}
.wd-toggle i {
    background: #eee;
    padding: 0 2px;
    font-style: normal;
}
.wd-line {
    display: block;
    width: 105px;
    height: 36px;
    margin-top: 1px;
}
.wd-rule {
    display: flex;
    align-items: center;
    gap: 4px;
    height: 8px;
    margin-top: -1px;
    white-space: nowrap;
    font-size: 3.800px;
}
.wd-rule::after {
    content: "";
    flex: 1;
    border-top: 1px solid #ccc;
}
.wd-cards {
    display: grid;
    grid-template-columns: repeat(4, 58px);
    gap: 7px 6px;
    margin-top: 3px;
    margin-bottom: 5px;
    padding-left: 1px;
}
.wd-card {
    display: flex;
    flex-direction: column;
    height: 27.500px;
    padding: 3px 4px;
    background: #eee;
    font-size: 3.700px;
    white-space: nowrap;
}
.wd-card b {
    color: #444;
}
.wd-card span {
    margin-top: 5px;
    padding-bottom: 2px;
    border-bottom: 1px solid #bbb;
}
.wd-card small {
    margin-top: 1px;
    font-size: 2.400px;
}

/* wireframe: table */
.wt {
    padding: 0 4px 0 3px;
    font-size: 5.700px;
}
.wt-crumb {
    height: 9px;
    margin-top: 10px;
    font-size: 4.400px;
    line-height: 9px;
}
.wt-crumb a, .wc-foot a, .wc-facts a {
    color: #2f78c5;
    text-decoration: underline;
}
.wt-select {
    height: 8px;
    margin-top: 11px;
    margin-right: 0;
    border: 1px solid #888;
    border-top-width: 1px;
    font-size: 5.700px;
    line-height: 7px;
    padding-left: 1px;
}
.wt-bar {
    display: flex;
    justify-content: space-between;
    align-items: center;
    height: 9px;
    margin-top: 5px;
}
.wt-tabs {
    display: flex;
    border: 1px solid #777;
    font-size: 4.300px;
    line-height: 5.500px;
}
.wt-tabs b {
    width: 22px;
    background: #8cabd6;
    font-weight: 400;
    text-align: center;
}
.wt-tabs i {
    width: 24px;
    font-style: normal;
    text-align: center;
}
.wt-filter {
    display: flex;
    align-items: center;
    gap: 3px;
    font-size: 5px;
}
.wt-filter em {
    width: 76px;
    height: 6px;
    padding-left: 1px;
    border: 1px solid #888;
    font-size: 3.800px;
    font-style: normal;
    line-height: 4px;
    color: #888;
}
.wt-table {
    width: 395px;
    margin-top: 4.500px;
    border-collapse: collapse;
    table-layout: fixed;
    font-size: 5.700px;
}
.wt-table th {
    height: 11px;
    padding-left: 2.500px;
    background: #d5d5d5;
    border-right: 1px solid #555;
    border-bottom: 1px solid #888;
    font-weight: 400;
    text-align: left;
    white-space: nowrap;
}
.wt-table th:nth-child(1), .wt-table td:nth-child(1) { width: 49.500px; }
.wt-table th:nth-child(2), .wt-table td:nth-child(2) { width: 61px; }
.wt-table th:nth-child(3), .wt-table td:nth-child(3) { width: 51px; }
.wt-table th:nth-child(4), .wt-table td:nth-child(4) { width: 89.500px; }
.wt-table th:nth-child(5), .wt-table td:nth-child(5) { width: 99px; }
.wt-table th i {
    float: right;
    margin-right: 3px;
    font-style: normal;
}
.wt-table thead::after {
    content: "";
    display: table-row;
    height: 14px;
}
.wt-table td {
    height: 17.300px;
    padding: 0 0 0 2.500px;
    border-right: 1px solid #666;
    border-bottom: 1px solid #888;
    white-space: nowrap;
    overflow: hidden;
}
.wt-table td:last-child {
    border: 0;
    padding: 0 0 0 2px;
}
.wt-table .new td {
    background: #666;
    color: #fff;
    border-bottom-color: #666;
}
.wt-table .new td:last-child {
    background: #fff;
}
.wt-table button {
    display: block;
    width: 42px;
    height: 15px;
    padding: 0;
    background: #fff;
    border: 1px solid #777;
    border-right-width: 1.500px;
    border-bottom-width: 1.500px;
    font: 3.800px Roboto, sans-serif;
    color: #333;
}
.wt-pager {
    display: flex;
    justify-content: center;
    margin-top: 16px;
    padding-right: 22px;
    height: 8px;
    font-size: 3px;
}
.wt-pager i, .wt-pager b {
    width: 11px;
    border: 1px solid #777;
    border-left-width: 0;
    font-style: normal;
    font-weight: 400;
    text-align: center;
    line-height: 6px;
}
.wt-pager b {
    background: #7da4dd;
}

/* wireframe: chat */
.wc {
    display: flex;
}
.wc-info {
    position: relative;
    flex: none;
    width: 80px;
    padding: 9px 0 0 8px;
    background: #eee;
    font-size: 5.700px;
    color: #333;
}
.wc-no {
    display: flex;
    align-items: center;
    gap: 3px;
    height: 7px;
    white-space: nowrap;
}
.wc-no svg {
    width: 7px;
    height: 9px;
}
.wc-ph {
    display: block;
    width: 18px;
    height: 18px;
    margin: 4px 0 4px 21px;
}
.wc-line {
    height: 7.400px;
    line-height: 7.400px;
    margin-top: 0;
    white-space: nowrap;
}
.wc-flag {
    width: 6px;
    height: 6px;
}
.wc-acts {
    display: flex;
    gap: 10px;
    align-items: center;
    height: 9px;
    margin-top: 5px;
    padding-left: 3px;
}
.wc-acts svg {
    width: 7px;
    height: 7px;
    color: #222;
}
.wc-acts span {
    font-weight: 700;
}
.wc-facts {
    margin-top: 6px;
    padding-top: 5px;
    border-top: 1px solid #bbb;
    margin-right: 6px;
    white-space: nowrap;
    line-height: 7px;
}
.wc-facts dt {
    margin-top: 3.300px;
    color: #aaa;
    font-size: 3.800px;
    line-height: 5px;
}
.wc-facts dd small {
    display: block;
    font-size: 3px;
    line-height: 4px;
}
.wc-foot {
    position: absolute;
    left: 6px;
    right: 6px;
    bottom: 5px;
    display: flex;
    justify-content: space-between;
    align-items: center;
}
.wc-btn {
    height: 8px;
    padding: 0 2px;
    background: #fff;
    border: 1px solid #555;
    font: 5.400px Roboto, sans-serif;
    line-height: 5px;
    color: #333;
}
.wc-chat {
    display: flex;
    flex-direction: column;
    flex: 1;
    min-width: 0;
    padding: 4px 8px 3px 8px;
    font-size: 5.700px;
    line-height: 7.300px;
    color: #333;
}
.wc-full .wc-chat {
    padding: 4px 38px 3px 28px;
}
.wc-event {
    display: flex;
    align-items: center;
    gap: 7px;
    height: 7px;
    font-size: 5.500px;
    white-space: nowrap;
}
.wc-event::before, .wc-event::after {
    content: "";
    flex: 1;
    border-top: 1px solid #bbb;
}
.wc-date {
    margin-top: 1px;
    height: 6px;
    font-size: 2.800px;
    text-align: center;
    line-height: 6px;
}
.wc-msg {
    width: 107px;
    margin-top: 3px;
    padding: 1.500px 2px 2px 2px;
    border: 1px solid #aaa;
    border-bottom-width: 1.500px;
    white-space: nowrap;
}
.wc-msg small {
    display: block;
    font-size: 2.800px;
    line-height: 5px;
    text-align: right;
}
.wc-msg.me {
    align-self: flex-end;
    width: 125px;
}
.wc-strip {
    display: flex;
    justify-content: space-between;
    height: 11px;
    margin-top: 4px;
    padding: 0 4px 0 2px;
    background: #eee;
    font-size: 5.500px;
    line-height: 11px;
}
.wc-space {
    flex: 1;
}
.wc-input {
    display: flex;
    align-items: center;
    justify-content: flex-end;
    gap: 4px;
    height: 11px;
    padding-right: 4px;
    border: 1px solid #888;
    color: #aaa;
    font-size: 4.800px;
}
.wc-input svg {
    width: 6px;
    height: 6px;
    color: #333;
}
.wc-tools {
    display: flex;
    gap: 3px;
    margin-top: 2px;
    height: 7px;
}
.wc-tools svg {
    width: 6px;
    height: 6px;
}
.wc-guide {
    flex: none;
    width: 84px;
    padding: 13px 4px 0 3.500px;
    border-left: 1px solid #8a8a8a;
    font-size: 4.500px;
    line-height: 5.900px;
    color: #333;
}
.wc-search {
    height: 7px;
    margin-bottom: 13px;
    border: 1px solid #888;
    border-bottom-width: 1.500px;
    color: #888;
    line-height: 5px;
    padding-left: 1px;
}
.wc-guide h4 {
    margin: 0 0 3px;
    font-size: 4.500px;
    font-weight: 700;
    line-height: 5.900px;
}
.wc-guide p {
    margin-bottom: 9px;
}
.wf-shade {
    position: absolute;
    inset: 0;
    background: rgba(0, 0, 0, .42);
}
.wf-modal {
    position: absolute;
    background: #fff;
    font-size: 4.700px;
    color: #333;
}
.wf-modal-team {
    left: 112px;
    top: 52px;
    width: 197px;
    height: 120px;
    padding: 12px 10px 0;
}
.wf-modal-close {
    left: 139px;
    top: 57px;
    width: 198px;
    height: 121px;
    padding: 10px 12px 0;
}
.wm-top {
    display: flex;
    justify-content: space-between;
    align-items: center;
}
.wm-field {
    width: 162px;
    height: 6px;
    border: 1px solid #888;
    font-size: 3.500px;
    line-height: 4px;
    color: #888;
}
.wm-item {
    display: flex;
    gap: 4px;
    align-items: center;
    height: 23px;
    margin-top: 0;
}
.wm-top + .wm-item {
    margin-top: 5px;
}
.wm-item svg {
    width: 13px;
    height: 15px;
}
.wm-item small {
    display: block;
    color: #999;
    font-size: 3.500px;
    line-height: 4px;
}
.wm-area {
    height: 64px;
    margin-top: 8px;
    border: 1px solid #999;
}
.wm-foot {
    display: flex;
    justify-content: flex-end;
    margin-top: 11px;
}

/* case study text */
.notes {
    margin: 0 0 0 36px;
    padding: 0;
    color: #999;
    font-size: 9px;
    font-weight: 300;
    line-height: 11px;
    white-space: nowrap;
}
.notes li {
    padding-left: 8px;
}
.intro {
    margin: 26px 0 0 60px;
    color: #888;
    font-size: 9.250px;
    font-weight: 300;
    line-height: 11px;
    white-space: nowrap;
}
.steps {
    display: block;
    margin-top: 19px;
}
.step-line {
    fill: none;
    stroke: #a5a5a5;
    stroke-width: 1;
}
.step-arrow {
    fill: #999;
}
.step-dot {
    fill: #3f8ccb;
}
.step-no {
    fill: #fff;
    font-size: 7px;
    text-anchor: middle;
}
.step-name {
    fill: #777;
    font-size: 9.200px;
    font-weight: 300;
    text-anchor: middle;
}

/* spec blocks */
.spec {
    display: flex;
    position: relative;
}
.spec-label {
    flex: none;
    width: 135px;
    margin-right: 36.500px;
    color: #555;
    font-size: 9.200px;
    font-weight: 500;
    text-align: right;
    white-space: nowrap;
}
.spec-palette {
    margin-top: 20px;
    height: 97px;
}
.spec-palette .spec-label {
    padding-top: 1px;
}
.swatches {
    display: grid;
    grid-template-columns: repeat(4, 77.500px);
    grid-template-rows: 43px 43px;
    gap: 11px 5px;
}
.swatch {
    display: flex;
    align-items: center;
    justify-content: center;
    box-shadow: 0 1px 1px rgba(0, 0, 0, .3);
    color: #fff;
    font-size: 10.500px;
    font-weight: 300;
}
.sw-blue { background: #355a83; }
.sw-navy { background: #273242; }
.sw-grey { background: #6c6e71; }
.sw-white { background: #f8f8f8; color: #555; }
.sw-aqua { background: #dafcfc; color: #555; }
.sw-orange { background: #fe6240; }
.sw-green { background: #61c08c; }
.spec-type {
    margin-top: 32px;
    height: 104px;
}
.spec-type .spec-label {
    padding-top: 6px;
}
.type-grid {
    display: grid;
    grid-template-columns: 132.500px 149px 153px 150px;
    grid-template-rows: 28px 28px 22px 26px;
    align-items: center;
    white-space: nowrap;
    color: #888;
}
.t-light { font-weight: 300; color: #999; }
.t-reg { font-weight: 400; }
.t-med { font-weight: 500; }
.t-bold { font-weight: 700; }
.t32 { font-size: 12.800px; }
.t24 { font-size: 11.500px; }
.t18 { font-size: 10.200px; }
.t16 { font-size: 9px; }
.spec-icons {
    margin-top: 41px;
    height: 64px;
}
.spec-icons .spec-label {
    margin-right: 23px;
}
.icon-grid {
    display: grid;
    grid-template-columns: repeat(6, 40.800px);
    grid-template-rows: 16px 16px;
    row-gap: 16px;
    justify-items: center;
    color: #8a8e96;
}
.icon-grid svg {
    width: 16px;
    height: 16px;
}

/* high fidelity mocks */
.mock {
    display: grid;
    grid-template-columns: 87px 1fr;
    grid-template-rows: 29px 1fr;
    width: 697px;
    margin-left: 36px;
    background: #f8f8f8;
    box-shadow: 0 0 1px rgba(0, 0, 0, .5), 1px 1px 1px rgba(0, 0, 0, .2);
}
.mock-dash {
    height: 466px;
    margin-top: 36px;
}
.mock-refunds {
    height: 391px;
    margin-top: 25px;
}
.mock-chat {
    height: 392px;
    margin-top: 25px;
}
.mock-head {
    display: flex;
    align-items: center;
    grid-column: 1 / 3;
    padding: 0 21px 0 6px;
    background: #273242;
}
.mock-logo {
    width: 10px;
    height: 10px;
}
.mock-brand {
    margin-left: 6px;
    color: #b8c2cf;
    font-size: 9.500px;
    font-weight: 300;
}
.mock-tools {
    display: flex;
    align-items: center;
    margin-left: auto;
    color: #fff;
}
.mock-tools > svg, .mock-bell svg, .guide-on svg {
    display: block;
    width: 8px;
    height: 9px;
    margin-right: 11.500px;
}
.mock-tools > svg:nth-child(2) {
    width: 9px;
    margin-right: 11px;
}
.mock-bell {
    position: relative;
    display: flex;
    align-items: center;
    height: 16px;
    margin-right: 8px;
    border-right: 1px solid #5b6a7e;
}
.mock-bell svg {
    margin-right: 12.500px;
}
.mock-bell::after {
    content: "";
    position: absolute;
    right: 12px;
    top: 3px;
    width: 3.500px;
    height: 3.500px;
    border-radius: 50%;
    background: #e8455f;
}
.mock-tools > .mock-me {
    width: 11px;
    height: 11px;
    margin-right: 5.500px;
}
.mock-user {
    width: 41px;
    padding-left: 0;
    font-size: 5.700px;
    font-weight: 500;
    line-height: 7px;
    white-space: nowrap;
}
.mock-user small {
    display: block;
    color: #6f7b8c;
    font-size: 3.500px;
    font-weight: 400;
    line-height: 5px;
}
.mock-tools > .mock-chev {
    width: 6px;
    height: 4px;
    margin: 0;
    fill: none;
    stroke: #cfd6df;
    stroke-width: 1;
}
.mock-side {
    padding-top: 15px;
    background: #355a83;
    color: #dfe7f0;
    font-size: 5.700px;
}
.mock-side a {
    display: flex;
    align-items: center;
    height: 28px;
    margin: 0 8px 0 11.500px;
    padding-left: 4px;
    border-bottom: 1px solid #3f6590;
}
.mock-side a svg {
    width: 9px;
    height: 10px;
    margin-right: 6px;
    color: #fff;
}
.mock-side a:first-child {
    height: 23px;
}
.mock-side a:last-child {
    border: 0;
}
.mock-side a.active {
    margin: 0;
    padding-left: 15.500px;
    background: #dafcfc;
    color: #355a83;
    border: 0;
}
.mock-side a.active svg {
    color: #273242;
}
.card {
    background: #fff;
    border-radius: 2px;
    box-shadow: 0 0 1px rgba(0, 0, 0, .3), 1px 1px 2px rgba(0, 0, 0, .28);
}
.mock-main {
    min-width: 0;
    border-right: 1px solid #d0d0d0;
}

/* dashboard */
.dash {
    display: grid;
    grid-template-columns: repeat(3, 190px);
    grid-template-rows: 44px 128px 217px;
    gap: 9px 8.500px;
    padding: 16px 0 0 11px;
}
.stat {
    display: flex;
    align-items: center;
    padding-left: 8px;
}
.stat-ic {
    width: 24px;
    height: 26px;
    margin-right: 14px;
    color: #555;
}
.stat h5 {
    color: #444;
    font-size: 6.300px;
    font-weight: 700;
    line-height: 9px;
    white-space: nowrap;
}
.stat p {
    margin-top: 2px;
    color: #6c6e71;
    font-size: 10.500px;
    font-weight: 300;
    line-height: 13px;
}
.flow {
    grid-column: 1 / 3;
    position: relative;
    padding-top: 8px;
}
.card-top {
    display: flex;
    align-items: center;
    justify-content: space-between;
    height: 11px;
    padding: 0 7px 0 9px;
    margin-bottom: 1px;
}
.card h4 {
    color: #444;
    font-size: 9px;
    font-weight: 500;
    white-space: nowrap;
}
.seg {
    display: flex;
    height: 11px;
    border: 1px solid #b5c2d2;
    border-radius: 3px;
    color: #355a83;
    font-size: 4.500px;
    line-height: 9px;
    overflow: hidden;
}
.seg b, .seg span {
    width: 38px;
    font-weight: 500;
    text-align: center;
    border-right: 1px solid #b5c2d2;
}
.seg b {
    background: #355a83;
    color: #fff;
}
.seg span:last-child {
    border: 0;
}
.flow-chart {
    display: block;
}
.flow-chart .grid {
    fill: none;
    stroke: #e3e3e3;
}
.flow-chart text {
    fill: #888;
    font-size: 4px;
    font-weight: 300;
    text-anchor: middle;
}
.flow-chart .leg {
    font-size: 4.500px;
    text-anchor: start;
}
.bar-g { fill: #61c08c; }
.bar-r { fill: #fe6240; }
.dot-g { fill: #61c08c; }
.dot-r { fill: #fe6240; }
.flow-nav {
    fill: none;
    stroke: #888;
    stroke-width: .7;
}
.pending {
    padding: 8px 12px 0 7.500px;
}
.kv {
    display: flex;
    justify-content: space-between;
    margin: 0 2px 0 10px;
    color: #888;
    font-size: 5.300px;
    line-height: 16px;
}
.pending h4 + .kv {
    border-bottom: 1px solid #e6e6e6;
    margin-top: 13.500px;
}
.kv + .kv {
    margin-top: 0;
}
.kv b {
    font-weight: 500;
    color: #666;
}
.pending-low {
    display: flex;
    align-items: center;
    margin-top: 11px;
    padding-left: 13px;
}
.donut {
    width: 40px;
    height: 40px;
    fill: none;
    transform: rotate(-90deg);
}
.donut circle {
    stroke-width: 5;
}
.donut text {
    fill: #777;
    font-size: 10px;
    font-weight: 300;
    text-anchor: middle;
    transform: rotate(90deg);
    transform-origin: 20px 20px;
}
.prio {
    margin-left: 37px;
    color: #888;
    font-size: 5px;
    font-weight: 300;
}
.prio li {
    position: relative;
    padding-left: 8px;
    line-height: 7.600px;
}
.prio li::before {
    content: "";
    position: absolute;
    left: 0;
    top: 2.800px;
    width: 2px;
    height: 2px;
    border-radius: 50%;
}
.prio .g::before { background: #61c08c; }
.prio .o::before { background: #fe6240; }
.prio .r::before { background: #c0233f; }
.cats {
    grid-column: 1 / 4;
    padding: 8px 0 0 9px;
}
.cats h4 {
    height: 11px;
}
.tabs {
    display: flex;
    height: 21px;
    margin: 18px 16px 0 5.500px;
    border-bottom: 1px solid #d9e2ec;
    color: #6c6e71;
    font-size: 7.200px;
    font-weight: 400;
    line-height: 10px;
}
.tabs span {
    padding: 0 10.500px;
    height: 14.500px;
    margin-right: 0;
}
.tabs .on {
    color: #355a83;
    font-weight: 500;
    border-bottom: 1px solid #355a83;
}
.cat-grid {
    display: grid;
    grid-template-columns: repeat(4, 116.500px);
    grid-auto-rows: 57.500px;
    gap: 14.500px 30px;
    margin: 15px 0 0 5.500px;
}
.cat {
    padding: 4px 5px 0;
    border-radius: 2px;
    box-shadow: 0 0 1px rgba(0, 0, 0, .2), 0 1px 2px rgba(0, 0, 0, .3);
}
.cat.hover {
    background: #f4f4f4;
}
.cat h6 {
    height: 20px;
    color: #666;
    font-size: 7px;
    font-weight: 500;
    line-height: 10px;
    white-space: nowrap;
}
.cat .row {
    display: flex;
    justify-content: space-between;
    align-items: center;
    height: 16.500px;
    padding-right: 0;
    color: #888;
    font-size: 5.200px;
    font-weight: 400;
}
.cat .row:first-of-type {
    border-bottom: 1px solid #e4e4e4;
}
.cat .row b {
    width: 13px;
    color: #555;
    font-weight: 500;
    text-align: center;
}
.cat .row .pill {
    height: 13px;
    border-radius: 50%;
    background: #355a83;
    color: #fff;
    line-height: 13px;
}
.cat .strong {
    color: #444;
    font-weight: 500;
}

/* refunds */
.refunds {
    padding: 15px 12px 0 12px;
}
.ref-card {
    height: 335px;
    padding: 9px 16px 0 14px;
}
.ref-card h4 {
    height: 11px;
}
.ref-card .tabs {
    margin: 21px 0 0 3px;
    height: 17px;
    font-size: 7.300px;
}
.ref-card .tabs span {
    padding: 0 10px;
    height: 12px;
}
.ref-tools {
    display: flex;
    justify-content: flex-end;
    align-items: flex-end;
    height: 23px;
    color: #999;
    font-size: 7px;
}
.ref-search {
    display: flex;
    justify-content: space-between;
    align-items: center;
    width: 124px;
    height: 16px;
    border-bottom: 1px solid #ccc;
    color: #bbb;
    font-weight: 300;
}
.ref-search svg {
    width: 11px;
    height: 11px;
    margin-right: 3px;
    color: #888;
}
.ref-filter {
    display: flex;
    align-items: center;
    gap: 3px;
    margin-left: 9px;
    height: 16px;
    color: #777;
}
.ref-filter svg {
    width: 10px;
    height: 12px;
    color: #888;
}
.ref-table {
    width: 557px;
    margin-top: 4px;
    border-collapse: collapse;
    table-layout: fixed;
    font-size: 7.300px;
}
.ref-table th {
    height: 20px;
    padding-left: 3.500px;
    background: #273242;
    color: #dfe3e8;
    border-bottom: 2px solid #888;
    border-right: 1px solid #fff;
    font-weight: 400;
    text-align: left;
    white-space: nowrap;
}
.ref-table thead::after {
    content: "";
    display: table-row;
    height: 2.500px;
}
.ref-table th:nth-child(1) { width: 97px; }
.ref-table th:nth-child(2) { width: 97px; }
.ref-table th:nth-child(3) { width: 76px; }
.ref-table th:nth-child(4) { width: 118px; }
.ref-table th:nth-child(5) { width: 97px; }
.ref-table th:last-child { border-right: 0; }
.ref-table td {
    height: 23.500px;
    padding-left: 3.500px;
    border-bottom: 1px solid #ccc;
    color: #888;
    font-weight: 300;
    white-space: nowrap;
}
.ref-table .new td {
    background: #f3f3f3;
}
.ref-table a {
    color: #355a83;
    font-weight: 400;
}
.ref-foot {
    display: flex;
    justify-content: space-between;
    align-items: center;
    height: 14px;
    margin-top: 12.500px;
    font-size: 5px;
}
.ref-per {
    padding-left: 2px;
    color: #666;
}
.ref-per em {
    color: #355a83;
    font-style: normal;
}
.ref-pager {
    display: flex;
    align-items: center;
    color: #888;
    font-size: 5px;
}
.ref-pager .off {
    color: #bbb;
    margin-right: 5px;
}
.ref-pager b {
    width: 11px;
    height: 13px;
    margin-right: 0;
    background: #355a83;
    color: #fff;
    font-weight: 400;
    line-height: 13px;
    text-align: center;
}
.ref-pager i {
    width: 11.800px;
    font-style: normal;
    text-align: center;
}
.ref-pager span:last-child {
    margin-left: 6px;
}

/* chat */
.chat {
    display: flex;
    gap: 8px;
    padding: 15px 9px 14px 5px;
}
.tk {
    position: relative;
    flex: none;
    width: 119px;
    padding: 6px 8px 0 11.500px;
    color: #999;
    font-size: 6.500px;
    font-weight: 300;
}
.tk h3 {
    color: #6c6e71;
    font-size: 13px;
    font-weight: 300;
    line-height: 15px;
}
.tk-meta {
    display: grid;
    grid-template-columns: 34.500px 1fr;
    gap: 0 8.500px;
    margin-top: 1px;
    line-height: 14px;
}
.tk-meta dt {
    color: #555;
    font-size: 5.800px;
    font-weight: 500;
    text-align: right;
}
.tk-meta dd {
    display: flex;
    align-items: center;
    gap: 3px;
}
.tk-meta svg {
    width: 10px;
    height: 10px;
    color: #355a83;
}
.tk-acts {
    display: flex;
    justify-content: space-between;
    margin-top: 11px;
    padding: 0 0 4px 0;
    border-bottom: 1px solid #e4e4e4;
    color: #6c6e71;
}
.tk-acts svg {
    width: 11px;
    height: 11px;
}
.tk-fact {
    margin-top: 9px;
}
.f-sum {
    margin-top: 10px;
}
.f-phase {
    margin-top: 12px;
}
.f-phase + .tk-fact + .tk-fact {
    margin-top: 10.500px;
}
.tk-fact h6 {
    color: #555;
    font-size: 6px;
    font-weight: 500;
    line-height: 9px;
}
.tk-fact p {
    line-height: 8px;
}
.tk-fact a {
    display: block;
    margin-top: 1px;
    color: #355a83;
    text-decoration: underline;
    font-weight: 400;
    line-height: 9px;
}
.tk-fact.f-notes {
    margin-top: 12px;
}
.f-notes p {
    margin-top: 1px;
    line-height: 11px;
}
.tk-foot {
    position: absolute;
    left: 13px;
    right: 8px;
    bottom: 10px;
    display: flex;
    justify-content: space-between;
    align-items: center;
}
.tk-foot a {
    color: #355a83;
    text-decoration: underline;
}
.tk-foot button {
    width: 52px;
    height: 16px;
    padding: 0;
    background: #fff;
    border: 1px solid #aab6c4;
    border-radius: 2px;
    box-shadow: 0 1px 1px rgba(0, 0, 0, .3);
    color: #355a83;
    font: 7px Roboto, sans-serif;
}
.conv {
    position: relative;
    flex: 1;
    min-width: 0;
    display: flex;
    flex-direction: column;
    padding: 11px 39px 0 36px;
    color: #fff;
}
.conv-event {
    display: flex;
    align-items: center;
    gap: 6px;
    height: 8px;
    color: #999;
    font-size: 6.800px;
    font-weight: 300;
    white-space: nowrap;
}
.conv-event::before, .conv-event::after {
    content: "";
    flex: 1;
    border-top: 1px solid #e6e6e6;
}
.conv-date {
    height: 6px;
    margin-top: 2px;
    color: #888;
    font-size: 4px;
    line-height: 6px;
    text-align: center;
}
.msg {
    position: relative;
    flex: none;
    padding: 4px 9px 0 8px;
    border-radius: 2px;
    font-size: 5.400px;
    font-weight: 300;
    line-height: 8px;
    white-space: nowrap;
}
.msg small {
    position: absolute;
    right: 9px;
    bottom: 3px;
    font-size: 3.500px;
    line-height: 5px;
}
.msg::after {
    content: "";
    position: absolute;
    top: calc(75% - 2.500px);
    border: 2.500px solid transparent;
}
.agent {
    align-self: flex-end;
    width: 203px;
    background: #355a83;
}
.agent::after {
    left: 100%;
    border-left-color: #355a83;
}
.cust {
    align-self: flex-start;
    width: 191px;
    background: #273242;
}
.cust::after {
    right: 100%;
    border-right-color: #273242;
}
.msg-av {
    position: absolute;
    top: calc(75% - 6px);
    width: 12px;
    height: 12px;
    color: #6c6e71;
}
.agent .msg-av {
    left: 100%;
    margin-left: 11px;
    color: #273242;
}
.agent .av-grey {
    color: #6c6e71;
}
.cust .msg-av {
    right: 100%;
    margin-right: 7px;
}
.m1 { height: 36px; margin-top: 14.500px; }
.m2 { height: 33.500px; margin-top: 8.500px; }
.m3 { height: 36px; margin-top: 7px; }
.m4 { height: 33.500px; margin-top: 10px; }
.m5 { height: 36px; margin-top: 15px; }
.e2 {
    margin-top: 11px;
}
.conv-input {
    display: flex;
    align-items: center;
    justify-content: flex-end;
    flex: none;
    height: 17px;
    margin: 12.500px 1px 0 5.500px;
    padding-right: 4px;
    border: 1px solid #eee;
    color: #999;
}
.conv-input svg {
    width: 10px;
    height: 10px;
}
.conv-tools {
    display: flex;
    gap: 8px;
    margin: 3.500px 0 0 9px;
    color: #888;
}
.conv-tools svg {
    width: 7px;
    height: 8px;
}
.conv-scroll {
    position: absolute;
    right: 3px;
    top: 163px;
    height: 122px;
    border-left: 1px solid #888;
}

/* last row */
.last-row {
    display: flex;
    gap: 9px;
    margin: 25px 0 0 36px;
}
.mock-guide {
    flex: none;
    margin: 0;
    height: 392px;
    zoom: .664;
}
.guide {
    flex: none;
    width: 118px;
    padding: 8px 6px 0;
    color: #777;
    font-size: 5.200px;
    line-height: 7.200px;
    font-weight: 300;
}
.guide h4 {
    color: #555;
    font-size: 6.500px;
    font-weight: 400;
}
.guide-search {
    display: flex;
    justify-content: space-between;
    align-items: center;
    height: 14px;
    margin: 8px 0 19px;
    border-bottom: 1px solid #ddd;
    color: #bbb;
}
.guide-search svg {
    width: 9px;
    height: 9px;
    color: #999;
}
.guide h6 {
    margin: 0 0 4px;
    color: #444;
    font-size: 5.200px;
    font-weight: 500;
    line-height: 7.200px;
}
.guide p {
    margin-bottom: 12px;
}
.guide-on {
    display: block;
    margin-right: 8px;
    padding: 2px;
    border-radius: 50%;
    background: #fff;
    color: #273242;
}
.guide-on svg {
    margin: 0;
}
.thumbs {
    display: flex;
    flex-direction: column;
    gap: 8px;
    width: 223px;
}
.thumb {
    position: relative;
    height: 126.500px;
    background: #4d4e50;
    display: flex;
    flex-direction: column;
}
.th-head {
    flex: none;
    height: 9px;
    background: #15191f;
}
.th-body {
    display: flex;
    flex: 1;
}
.th-side {
    width: 28px;
    background: #1c2938;
}
.th-panel {
    width: 39px;
    margin: 5px 0 5px 2px;
    background: #565759;
}
.th-chat {
    flex: 1;
    position: relative;
    margin: 5px 3px 5px 3px;
    background: #565759;
}
.th-chat i {
    position: absolute;
    height: 12px;
    background: #1f3349;
}
.th-chat .b1 { right: 11px; top: 14px; width: 65px; }
.th-chat .b2 { left: 10px; top: 32px; width: 60px; background: #12161d; }
.th-chat .b3 { right: 11px; top: 42px; width: 65px; }
.th-chat .b4 { right: 11px; top: 80px; width: 65px; }
.th-modal {
    position: absolute;
    left: 86.500px;
    top: 31px;
    width: 84.500px;
    height: 64px;
    padding: 3px 5px 0;
    background: #fff;
    color: #777;
    font-size: 2.400px;
    line-height: 3.400px;
}
.th-modal-notes {
    top: 30.500px;
    height: 62px;
}
.th-modal h6 {
    font-size: 3px;
    font-weight: 500;
    line-height: 5px;
}
.th-list {
    display: flex;
    flex-direction: column;
    gap: 3px;
    height: 31px;
    margin-top: 7px;
    padding: 1px 0 0 6px;
    border-right: 1px solid #888;
    white-space: nowrap;
}
.th-area {
    height: 23px;
    margin-top: 6px;
    border: 1px solid #ddd;
    border-bottom: 1px solid #ccc;
}
.th-btns {
    display: flex;
    justify-content: flex-end;
    gap: 5px;
    margin-top: 6px;
    white-space: nowrap;
}
.th-btns u {
    padding: 0 4px;
    border: .5px solid #aaa;
    text-decoration: none;
    line-height: 4px;
}
.th-btns b {
    padding: 0 3px;
    background: #355a83;
    color: #fff;
    font-weight: 400;
    line-height: 4px;
}
```
